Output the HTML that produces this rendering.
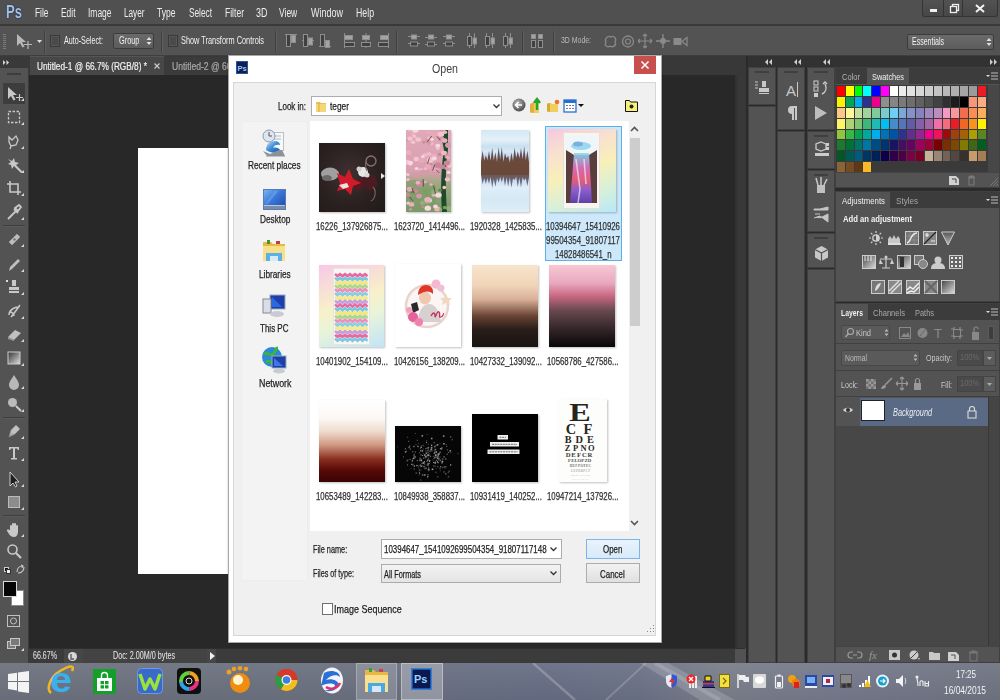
<!DOCTYPE html>
<html><head><meta charset="utf-8">
<style>
*{box-sizing:border-box;margin:0;padding:0}
html,body{width:1000px;height:700px;overflow:hidden;background:#282828;font-family:"Liberation Sans",sans-serif;position:relative}
.a{position:absolute}
.t{position:absolute;white-space:nowrap;line-height:1;transform-origin:0 0}
svg{overflow:visible}
</style></head><body>
<div class="a" style="left:0px;top:0px;width:1000px;height:25px;background:#505050;"></div>
<div class="a" style="left:0px;top:24px;width:1000px;height:2px;background:#3a3a3a;"></div>
<span class="t" id="tx0" style="left:5.5px;top:2.32px;font-size:19px;color:#a2bde6;font-weight:bold;transform:scaleX(0.688);text-shadow:0 0 1.5px #1a2a40,0 0 1px #1a2a40;">Ps</span>
<div class="a" style="left:0px;top:0px;width:28px;height:24px;background:rgba(40,60,90,.0);"></div>
<span class="t" id="tx1" style="left:34.5px;top:6.64px;font-size:12px;color:#ececec;font-weight:normal;transform:scaleX(0.698);">File</span>
<span class="t" id="tx2" style="left:60.5px;top:6.64px;font-size:12px;color:#ececec;font-weight:normal;transform:scaleX(0.701);">Edit</span>
<span class="t" id="tx3" style="left:87.5px;top:6.64px;font-size:12px;color:#ececec;font-weight:normal;transform:scaleX(0.704);">Image</span>
<span class="t" id="tx4" style="left:124.0px;top:6.64px;font-size:12px;color:#ececec;font-weight:normal;transform:scaleX(0.683);">Layer</span>
<span class="t" id="tx5" style="left:157.0px;top:6.64px;font-size:12px;color:#ececec;font-weight:normal;transform:scaleX(0.711);">Type</span>
<span class="t" id="tx6" style="left:188.5px;top:6.64px;font-size:12px;color:#ececec;font-weight:normal;transform:scaleX(0.689);">Select</span>
<span class="t" id="tx7" style="left:224.5px;top:6.64px;font-size:12px;color:#ececec;font-weight:normal;transform:scaleX(0.712);">Filter</span>
<span class="t" id="tx8" style="left:256.0px;top:6.64px;font-size:12px;color:#ececec;font-weight:normal;transform:scaleX(0.749);">3D</span>
<span class="t" id="tx9" style="left:279.25px;top:6.64px;font-size:12px;color:#ececec;font-weight:normal;transform:scaleX(0.707);">View</span>
<span class="t" id="tx10" style="left:311.0px;top:6.64px;font-size:12px;color:#ececec;font-weight:normal;transform:scaleX(0.750);">Window</span>
<span class="t" id="tx11" style="left:355.5px;top:6.64px;font-size:12px;color:#ececec;font-weight:normal;transform:scaleX(0.729);">Help</span>
<div class="a" style="left:922px;top:0px;width:76px;height:17px;background:linear-gradient(#525252,#474747);border:1px solid #343434;border-top:none;border-radius:0 0 3px 3px"></div>
<div class="a" style="left:943px;top:0px;width:1px;height:16px;background:#333;"></div>
<div class="a" style="left:962px;top:0px;width:1px;height:16px;background:#333;"></div>
<div class="a" style="left:930px;top:9px;width:7px;height:3px;background:#f0f0f0;"></div>
<svg class="a" style="left:950px;top:4px;" width="9" height="9" viewBox="0 0 9 9"><rect x="2.5" y="0.5" width="6" height="6" fill="none" stroke="#eee" stroke-width="1.3"/><rect x="0.5" y="2.5" width="6" height="6" fill="#454545" stroke="#eee" stroke-width="1.3"/></svg>
<svg class="a" style="left:975px;top:4px;" width="10" height="9" viewBox="0 0 10 9"><path d="M1 1L9 8M9 1L1 8" stroke="#f2f2f2" stroke-width="2"/></svg>
<div class="a" style="left:0px;top:26px;width:1000px;height:30px;background:#535353;"></div>
<div class="a" style="left:0px;top:55px;width:1000px;height:1px;background:#3e3e3e;"></div>
<div class="a" style="left:3px;top:34px;width:3px;height:15px;background:repeating-linear-gradient(#7a7a7a 0 1px,transparent 1px 2px);"></div>
<svg class="a" style="left:16px;top:33px;" width="28" height="16" viewBox="0 0 28 16"><path d="M1 1 L1 13 L4 10 L6.5 14.5 L8.5 13.5 L6 9 L10 9 Z" fill="#b8b8b8"/><path d="M8 11.5h8M12 8v8" stroke="#b8b8b8" stroke-width="1.2"/><path d="M21 7h5l-2.5 3z" fill="#dedede"/></svg>
<div class="a" style="left:44px;top:31px;width:1px;height:22px;background:#404040;"></div>
<div class="a" style="left:45px;top:31px;width:1px;height:22px;background:#5e5e5e;"></div>
<div class="a" style="left:50px;top:35px;width:10px;height:12px;background:#4a4a4a;border:1px solid #393939;box-shadow:inset 0 0 0 1px #575757"></div>
<span class="t" id="tx12" style="left:64px;top:35.53px;font-size:10px;color:#f0f0f0;font-weight:normal;transform:scaleX(0.716);">Auto-Select:</span>
<div class="a" style="left:113px;top:33px;width:41px;height:16px;background:linear-gradient(#6a6a6a,#5c5c5c);border:1px solid #3c3c3c;border-radius:2px"></div>
<span class="t" id="tx13" style="left:118.6px;top:35.73px;font-size:10px;color:#f0f0f0;font-weight:normal;transform:scaleX(0.734);">Group</span>
<svg class="a" style="left:146px;top:36px;" width="6" height="10" viewBox="0 0 6 10"><path d="M0.5 4L3 1L5.5 4zM0.5 6L3 9L5.5 6z" fill="#e0e0e0"/></svg>
<div class="a" style="left:161px;top:31px;width:1px;height:22px;background:#404040;"></div>
<div class="a" style="left:162px;top:31px;width:1px;height:22px;background:#5e5e5e;"></div>
<div class="a" style="left:168px;top:35px;width:10px;height:12px;background:#4a4a4a;border:1px solid #393939;box-shadow:inset 0 0 0 1px #575757"></div>
<span class="t" id="tx14" style="left:181px;top:35.53px;font-size:10px;color:#f0f0f0;font-weight:normal;transform:scaleX(0.736);">Show Transform Controls</span>
<div class="a" style="left:275px;top:31px;width:1px;height:22px;background:#404040;"></div>
<div class="a" style="left:276px;top:31px;width:1px;height:22px;background:#5e5e5e;"></div>
<div class="a" style="left:396px;top:31px;width:1px;height:22px;background:#404040;"></div>
<div class="a" style="left:397px;top:31px;width:1px;height:22px;background:#5e5e5e;"></div>
<div class="a" style="left:522px;top:31px;width:1px;height:22px;background:#404040;"></div>
<div class="a" style="left:523px;top:31px;width:1px;height:22px;background:#5e5e5e;"></div>
<div class="a" style="left:553px;top:31px;width:1px;height:22px;background:#404040;"></div>
<div class="a" style="left:554px;top:31px;width:1px;height:22px;background:#5e5e5e;"></div>
<svg class="a" style="left:285px;top:33px;" width="12" height="15" viewBox="0 0 12 15"><path d="M0 1.5h12" stroke="#8e8e8e"/><rect x="1.5" y="1.5" width="4" height="12" fill="#404040" stroke="#8e8e8e"/><rect x="6.5" y="2.5" width="4" height="7" fill="#a4a4a4" stroke="#8e8e8e"/></svg>
<svg class="a" style="left:302px;top:33px;" width="12" height="15" viewBox="0 0 12 15"><path d="M0 7.5h12" stroke="#8e8e8e"/><rect x="1.5" y="1.5" width="4" height="12" fill="#404040" stroke="#8e8e8e"/><rect x="6.5" y="5.0" width="4" height="7" fill="#a4a4a4" stroke="#8e8e8e"/></svg>
<svg class="a" style="left:319px;top:33px;" width="12" height="15" viewBox="0 0 12 15"><path d="M0 13.5h12" stroke="#8e8e8e"/><rect x="1.5" y="1.5" width="4" height="12" fill="#404040" stroke="#8e8e8e"/><rect x="6.5" y="7.5" width="4" height="7" fill="#a4a4a4" stroke="#8e8e8e"/></svg>
<svg class="a" style="left:343px;top:33px;" width="12" height="15" viewBox="0 0 12 15"><path d="M1.5 0v15" stroke="#8e8e8e"/><rect x="1.5" y="2.5" width="8" height="4" fill="#a4a4a4" stroke="#8e8e8e"/><rect x="1.5" y="9.5" width="10" height="4" fill="#404040" stroke="#8e8e8e"/></svg>
<svg class="a" style="left:360px;top:33px;" width="12" height="15" viewBox="0 0 12 15"><path d="M6 0v15" stroke="#8e8e8e"/><rect x="2.5" y="2.5" width="7" height="4" fill="#a4a4a4" stroke="#8e8e8e"/><rect x="1.5" y="9.5" width="9" height="4" fill="#404040" stroke="#8e8e8e"/></svg>
<svg class="a" style="left:378px;top:33px;" width="12" height="15" viewBox="0 0 12 15"><path d="M10.5 0v15" stroke="#8e8e8e"/><rect x="2.5" y="2.5" width="8" height="4" fill="#a4a4a4" stroke="#8e8e8e"/><rect x="0.5" y="9.5" width="10" height="4" fill="#404040" stroke="#8e8e8e"/></svg>
<svg class="a" style="left:408px;top:33px;" width="12" height="15" viewBox="0 0 12 15"><path d="M0 3.5h12M0 10.5h12" stroke="#8e8e8e"/><rect x="3.5" y="2" width="5" height="4" fill="#a4a4a4" stroke="#8e8e8e"/><rect x="2.5" y="9" width="7" height="4" fill="#404040" stroke="#8e8e8e"/></svg>
<svg class="a" style="left:425px;top:33px;" width="12" height="15" viewBox="0 0 12 15"><path d="M0 4.5h12M0 11.5h12" stroke="#8e8e8e"/><rect x="3.5" y="2" width="5" height="4" fill="#a4a4a4" stroke="#8e8e8e"/><rect x="2.5" y="9" width="7" height="4" fill="#404040" stroke="#8e8e8e"/></svg>
<svg class="a" style="left:443px;top:33px;" width="12" height="15" viewBox="0 0 12 15"><path d="M0 3.5h12M0 10.5h12" stroke="#8e8e8e"/><rect x="3.5" y="2" width="5" height="4" fill="#a4a4a4" stroke="#8e8e8e"/><rect x="2.5" y="9" width="7" height="4" fill="#404040" stroke="#8e8e8e"/></svg>
<svg class="a" style="left:466px;top:33px;" width="12" height="15" viewBox="0 0 12 15"><path d="M3.5 0v15M8.5 0v15" stroke="#8e8e8e"/><rect x="1.5" y="3.5" width="4" height="9" fill="#404040" stroke="#8e8e8e"/><rect x="7" y="5" width="3.5" height="6" fill="#a4a4a4" stroke="#8e8e8e"/></svg>
<svg class="a" style="left:484px;top:33px;" width="12" height="15" viewBox="0 0 12 15"><path d="M2.5 0v15M8.5 0v15" stroke="#8e8e8e"/><rect x="1.5" y="3.5" width="4" height="9" fill="#404040" stroke="#8e8e8e"/><rect x="7" y="5" width="3.5" height="6" fill="#a4a4a4" stroke="#8e8e8e"/></svg>
<svg class="a" style="left:502px;top:33px;" width="12" height="15" viewBox="0 0 12 15"><path d="M3.5 0v15M8.5 0v15" stroke="#8e8e8e"/><rect x="1.5" y="3.5" width="4" height="9" fill="#404040" stroke="#8e8e8e"/><rect x="7" y="5" width="3.5" height="6" fill="#a4a4a4" stroke="#8e8e8e"/></svg>
<svg class="a" style="left:530px;top:33px;" width="14" height="15" viewBox="0 0 14 15"><rect x="1.5" y="1.5" width="4" height="4" fill="#a4a4a4" stroke="#8e8e8e"/><rect x="8.5" y="1.5" width="4" height="4" fill="#a4a4a4" stroke="#8e8e8e"/><rect x="1.5" y="7.5" width="4" height="7" fill="#404040" stroke="#8e8e8e"/><rect x="8.5" y="7.5" width="4" height="7" fill="#404040" stroke="#8e8e8e"/></svg>
<span class="t" id="tx15" style="left:561px;top:36.38px;font-size:9px;color:#b9b9b9;font-weight:normal;transform:scaleX(0.769);">3D Mode:</span>
<svg class="a" style="left:603px;top:33px;" width="14" height="16" viewBox="0 0 14 16"><path d="M3 9c-2-3 2-7 5-5 3-2 6 2 4 5 2 3-2 6-5 4-3 2-6-1-4-4z" fill="none" stroke="#8a8a8a" stroke-width="1.3"/></svg>
<svg class="a" style="left:621px;top:33px;" width="14" height="16" viewBox="0 0 14 16"><circle cx="7" cy="8.5" r="5.5" fill="none" stroke="#8a8a8a" stroke-width="1.3"/><circle cx="7" cy="8.5" r="2.5" fill="none" stroke="#8a8a8a" stroke-width="1.2"/></svg>
<svg class="a" style="left:638px;top:33px;" width="14" height="16" viewBox="0 0 14 16"><path d="M7 1v14M0 8h14M7 1l-2 2M7 1l2 2M7 15l-2-2M7 15l2-2M0 8l2-2M0 8l2 2M14 8l-2-2M14 8l-2 2" stroke="#8a8a8a" stroke-width="1.2" fill="none"/></svg>
<svg class="a" style="left:656px;top:33px;" width="14" height="16" viewBox="0 0 14 16"><path d="M7 1v14M0 8h14" stroke="#8a8a8a" stroke-width="1.3"/><circle cx="7" cy="8" r="3" fill="#8a8a8a"/></svg>
<svg class="a" style="left:673px;top:33px;" width="14" height="16" viewBox="0 0 14 16"><rect x="0.5" y="5" width="8" height="7" fill="#8a8a8a"/><path d="M9 8.5l5-4v8z" fill="none" stroke="#8a8a8a" stroke-width="1.2"/></svg>
<div class="a" style="left:907px;top:34px;width:87px;height:16px;background:linear-gradient(#6a6a6a,#5c5c5c);border:1px solid #3c3c3c;border-radius:2px"></div>
<span class="t" id="tx16" style="left:912px;top:36.53px;font-size:10px;color:#f2f2f2;font-weight:normal;transform:scaleX(0.702);">Essentials</span>
<svg class="a" style="left:986px;top:37px;" width="6" height="10" viewBox="0 0 6 10"><path d="M0.5 4L3 1L5.5 4zM0.5 6L3 9L5.5 6z" fill="#e0e0e0"/></svg>
<div class="a" style="left:29px;top:56px;width:720px;height:19px;background:#383838;"></div>
<div class="a" style="left:30px;top:56px;width:134px;height:19px;background:#474747;border-top:1px solid #555"></div>
<div class="a" style="left:164px;top:57px;width:64px;height:18px;background:#3b3b3b;"></div>
<span class="t" id="tx17" style="left:37px;top:61.53px;font-size:10px;color:#f0f0f0;font-weight:normal;transform:scaleX(0.827);-webkit-text-stroke:.2px #f0f0f0;">Untitled-1 @ 66.7% (RGB/8) *</span>
<svg class="a" style="left:154px;top:63px;" width="6" height="6" viewBox="0 0 6 6"><path d="M0.5 0.5L5.5 5.5M5.5 0.5L0.5 5.5" stroke="#cfcfcf" stroke-width="1.1"/></svg>
<span class="t" id="tx18" style="left:172px;top:61.53px;font-size:10px;color:#a8a8a8;font-weight:normal;transform:scaleX(0.855);-webkit-text-stroke:.2px #a8a8a8;">Untitled-2 @ 66.7% (RGB/8)</span>
<div class="a" style="left:29px;top:75px;width:720px;height:573px;background:#282828;"></div>
<div class="a" style="left:735px;top:75px;width:11px;height:573px;background:linear-gradient(90deg,#303030,#393939 40%,#383838);"></div>
<div class="a" style="left:746px;top:56px;width:3px;height:607px;background:#2a2a2a;"></div>
<div class="a" style="left:138px;top:148px;width:95px;height:426px;background:#ffffff;"></div>
<div class="a" style="left:0px;top:56px;width:28px;height:607px;background:#535353;"></div>
<div class="a" style="left:28px;top:56px;width:1px;height:607px;background:#3a3a3a;"></div>
<div class="a" style="left:0px;top:56px;width:28px;height:12px;background:#393939;"></div>
<svg class="a" style="left:3px;top:60px;" width="7" height="5" viewBox="0 0 7 5"><path d="M0 0l2.5 2.5-2.5 2.5zM3.5 0l2.5 2.5-2.5 2.5z" fill="#d8d8d8"/></svg>
<div class="a" style="left:7px;top:73px;width:14px;height:2px;background:#3d3d3d;"></div>
<div class="a" style="left:3px;top:83px;width:22px;height:21px;background:#3d3d3d;border-radius:1px"></div>
<svg width="0" height="0" style="position:absolute"><defs><linearGradient id="gr1" x1="0" y1="0" x2="1" y2="1"><stop offset="0" stop-color="#333"/><stop offset="1" stop-color="#ddd"/></linearGradient></defs></svg>
<svg class="a" style="left:6px;top:85px;" width="18" height="16" viewBox="0 0 18 16"><path d="M2 2 L2 14 L5 11 L7.5 15.5 L9.5 14.5 L7 10 L11 10 Z" fill="#c8c8c8"/><path d="M10 12.5h7M13.5 9v7" stroke="#c8c8c8" stroke-width="1.2"/></svg>
<svg class="a" style="left:21px;top:98px;" width="3" height="3" viewBox="0 0 3 3"><path d="M3 0v3h-3z" fill="#d8d8d8"/></svg>
<svg class="a" style="left:6px;top:109px;" width="18" height="16" viewBox="0 0 18 16"><rect x="2.5" y="2.5" width="11" height="11" fill="none" stroke="#c8c8c8" stroke-width="1.3" stroke-dasharray="2.5 1.5"/></svg>
<svg class="a" style="left:21px;top:122px;" width="3" height="3" viewBox="0 0 3 3"><path d="M3 0v3h-3z" fill="#d8d8d8"/></svg>
<svg class="a" style="left:6px;top:133px;" width="18" height="16" viewBox="0 0 18 16"><path d="M3 4l3 3 4-4 2 4-2 5-5 1-2-4z M5 13l-1 3" fill="none" stroke="#c8c8c8" stroke-width="1.3"/></svg>
<svg class="a" style="left:21px;top:146px;" width="3" height="3" viewBox="0 0 3 3"><path d="M3 0v3h-3z" fill="#d8d8d8"/></svg>
<svg class="a" style="left:6px;top:157px;" width="18" height="16" viewBox="0 0 18 16"><path d="M2 2l4 2 2-3 1 4 4 1-3 2 7 7-2 1-7-7-2 3-1-4-3-1 3-2z" fill="#c8c8c8"/></svg>
<svg class="a" style="left:21px;top:170px;" width="3" height="3" viewBox="0 0 3 3"><path d="M3 0v3h-3z" fill="#d8d8d8"/></svg>
<svg class="a" style="left:6px;top:180px;" width="18" height="16" viewBox="0 0 18 16"><path d="M4 1v11h11M1 4h11v11" fill="none" stroke="#c8c8c8" stroke-width="1.6"/></svg>
<svg class="a" style="left:21px;top:193px;" width="3" height="3" viewBox="0 0 3 3"><path d="M3 0v3h-3z" fill="#d8d8d8"/></svg>
<svg class="a" style="left:6px;top:204px;" width="18" height="16" viewBox="0 0 18 16"><path d="M2 15l8-8M9 4l4-3 2 2-3 4zM8 5l4 4" stroke="#c8c8c8" stroke-width="1.8" fill="none"/></svg>
<svg class="a" style="left:21px;top:217px;" width="3" height="3" viewBox="0 0 3 3"><path d="M3 0v3h-3z" fill="#d8d8d8"/></svg>
<svg class="a" style="left:6px;top:231px;" width="18" height="16" viewBox="0 0 18 16"><path d="M3 11l8-8 3 3-8 8z" fill="#bdbdbd" stroke="#999"/><circle cx="8.5" cy="8.5" r="1.2" fill="#777"/></svg>
<svg class="a" style="left:21px;top:244px;" width="3" height="3" viewBox="0 0 3 3"><path d="M3 0v3h-3z" fill="#d8d8d8"/></svg>
<svg class="a" style="left:6px;top:256px;" width="18" height="16" viewBox="0 0 18 16"><path d="M3 15l1-4 8-8 2 2-8 8z" fill="#c0c0c0"/></svg>
<svg class="a" style="left:21px;top:269px;" width="3" height="3" viewBox="0 0 3 3"><path d="M3 0v3h-3z" fill="#d8d8d8"/></svg>
<svg class="a" style="left:6px;top:279px;" width="18" height="16" viewBox="0 0 18 16"><path d="M6 1h4v6h-4zM3 8h10v3h-10zM3 12h10v2h-10z" fill="#c8c8c8"/><path d="M0 1l2 2M2 1l-2 2" stroke="#ddd"/></svg>
<svg class="a" style="left:21px;top:292px;" width="3" height="3" viewBox="0 0 3 3"><path d="M3 0v3h-3z" fill="#d8d8d8"/></svg>
<svg class="a" style="left:6px;top:303px;" width="18" height="16" viewBox="0 0 18 16"><path d="M3 12c0-6 8-9 10-7M5 14c2-2 6-8 9-12M4 9c2 0 4 2 4 4" fill="none" stroke="#c8c8c8" stroke-width="1.5"/></svg>
<svg class="a" style="left:21px;top:316px;" width="3" height="3" viewBox="0 0 3 3"><path d="M3 0v3h-3z" fill="#d8d8d8"/></svg>
<svg class="a" style="left:6px;top:326px;" width="18" height="16" viewBox="0 0 18 16"><path d="M2 11l7-7 6 3-7 7z" fill="#c0c0c0"/><path d="M2 11v2l6 2v-1" fill="#999"/></svg>
<svg class="a" style="left:21px;top:339px;" width="3" height="3" viewBox="0 0 3 3"><path d="M3 0v3h-3z" fill="#d8d8d8"/></svg>
<svg class="a" style="left:6px;top:350px;" width="18" height="16" viewBox="0 0 18 16"><rect x="2" y="2" width="12" height="12" fill="url(#gr1)" stroke="#ccc"/></svg>
<svg class="a" style="left:21px;top:363px;" width="3" height="3" viewBox="0 0 3 3"><path d="M3 0v3h-3z" fill="#d8d8d8"/></svg>
<svg class="a" style="left:6px;top:373px;" width="18" height="16" viewBox="0 0 18 16"><path d="M8 2c3 5 5 7 5 10a5 5 0 0 1-10 0c0-3 2-5 5-10z" fill="#b8b8b8"/></svg>
<svg class="a" style="left:21px;top:386px;" width="3" height="3" viewBox="0 0 3 3"><path d="M3 0v3h-3z" fill="#d8d8d8"/></svg>
<svg class="a" style="left:6px;top:396px;" width="18" height="16" viewBox="0 0 18 16"><circle cx="6.5" cy="6.5" r="4.5" fill="#bbb"/><path d="M10 10l5 5" stroke="#ccc" stroke-width="2"/></svg>
<svg class="a" style="left:21px;top:409px;" width="3" height="3" viewBox="0 0 3 3"><path d="M3 0v3h-3z" fill="#d8d8d8"/></svg>
<svg class="a" style="left:6px;top:423px;" width="18" height="16" viewBox="0 0 18 16"><path d="M3 14l2-7 5-5 4 4-5 5z M3 14l4-4" fill="#c0c0c0" stroke="#888" stroke-width=".6"/></svg>
<svg class="a" style="left:21px;top:436px;" width="3" height="3" viewBox="0 0 3 3"><path d="M3 0v3h-3z" fill="#d8d8d8"/></svg>
<svg class="a" style="left:6px;top:445px;" width="18" height="16" viewBox="0 0 18 16"><path d="M3 2h10v3h-1l-1-1.5h-2V13h2v1.5H5V13h2V3.5H5L4 5H3z" fill="#c8c8c8"/></svg>
<svg class="a" style="left:21px;top:458px;" width="3" height="3" viewBox="0 0 3 3"><path d="M3 0v3h-3z" fill="#d8d8d8"/></svg>
<svg class="a" style="left:6px;top:471px;" width="18" height="16" viewBox="0 0 18 16"><path d="M4 1 L4 15 L7 12 L9.5 16 L11 15 L9 11 L13 11 Z" fill="#1e1e1e" stroke="#ccc" stroke-width="1"/></svg>
<svg class="a" style="left:21px;top:484px;" width="3" height="3" viewBox="0 0 3 3"><path d="M3 0v3h-3z" fill="#d8d8d8"/></svg>
<svg class="a" style="left:6px;top:494px;" width="18" height="16" viewBox="0 0 18 16"><rect x="2.5" y="2.5" width="11" height="11" fill="#8c8c8c" stroke="#bbb"/></svg>
<svg class="a" style="left:21px;top:507px;" width="3" height="3" viewBox="0 0 3 3"><path d="M3 0v3h-3z" fill="#d8d8d8"/></svg>
<svg class="a" style="left:6px;top:521px;" width="18" height="16" viewBox="0 0 18 16"><path d="M4 9V5a1 1 0 0 1 2 0v3V3a1 1 0 0 1 2 0v5V3a1 1 0 0 1 2 0v5V5a1 1 0 0 1 2 0v6c0 3-2 5-4 5s-4-1-5-3l-2-3a1 1 0 0 1 2-1z" fill="#c8c8c8"/></svg>
<svg class="a" style="left:21px;top:534px;" width="3" height="3" viewBox="0 0 3 3"><path d="M3 0v3h-3z" fill="#d8d8d8"/></svg>
<svg class="a" style="left:6px;top:543px;" width="18" height="16" viewBox="0 0 18 16"><circle cx="6.5" cy="6.5" r="4.5" fill="none" stroke="#c8c8c8" stroke-width="1.6"/><path d="M10 10l5 5" stroke="#c8c8c8" stroke-width="2.2"/></svg>
<div class="a" style="left:3px;top:225px;width:22px;height:1px;background:#3e3e3e;"></div>
<div class="a" style="left:3px;top:226px;width:22px;height:1px;background:#5a5a5a;"></div>
<div class="a" style="left:3px;top:417px;width:22px;height:1px;background:#3e3e3e;"></div>
<div class="a" style="left:3px;top:418px;width:22px;height:1px;background:#5a5a5a;"></div>
<div class="a" style="left:3px;top:515px;width:22px;height:1px;background:#3e3e3e;"></div>
<div class="a" style="left:3px;top:516px;width:22px;height:1px;background:#5a5a5a;"></div>
<div class="a" style="left:4px;top:567px;width:5px;height:5px;background:#111;border:1px solid #ccc"></div>
<div class="a" style="left:6px;top:569px;width:5px;height:5px;background:#eee;border:1px solid #333"></div>
<svg class="a" style="left:16px;top:565px;" width="9" height="9" viewBox="0 0 9 9"><path d="M1 7c0-4 3-6 6-6M5 0l2 1-1 2M8 2c0 4-3 6-6 6" fill="none" stroke="#ccc" stroke-width="1.1"/></svg>
<div class="a" style="left:11px;top:590px;width:13px;height:16px;background:#ffffff;border:1px solid #888"></div>
<div class="a" style="left:3px;top:581px;width:14px;height:16px;background:#050505;border:1px solid #d8d8d8"></div>
<div class="a" style="left:7px;top:615px;width:13px;height:12px;background:transparent;border:1px solid #c0c0c0"></div>
<svg class="a" style="left:9px;top:617px;" width="9" height="8" viewBox="0 0 9 8"><circle cx="4.5" cy="4" r="3" fill="none" stroke="#c0c0c0" stroke-width="1"/></svg>
<div class="a" style="left:7px;top:641px;width:9px;height:8px;background:#7a7a7a;border:1px solid #c8c8c8"></div>
<div class="a" style="left:10px;top:638px;width:10px;height:8px;background:#7a7a7a;border:1px solid #c8c8c8"></div>
<svg class="a" style="left:21px;top:648px;" width="3" height="3" viewBox="0 0 3 3"><path d="M3 0v3h-3z" fill="#d8d8d8"/></svg>
<div class="a" style="left:29px;top:648px;width:717px;height:15px;background:#3b3b3b;"></div>
<div class="a" style="left:735px;top:648px;width:11px;height:15px;background:#525252;"></div>
<div class="a" style="left:29px;top:648px;width:716px;height:1px;background:#2e2e2e;"></div>
<span class="t" id="tx19" style="left:33px;top:650.53px;font-size:10px;color:#ececec;font-weight:normal;transform:scaleX(0.708);">66.67%</span>
<div class="a" style="left:64px;top:649px;width:19px;height:14px;background:#474747;"></div>
<svg class="a" style="left:67px;top:651px;" width="11" height="11" viewBox="0 0 11 11"><circle cx="5.5" cy="5.5" r="4.5" fill="#d8d8d8"/><path d="M4 3v5h3" stroke="#555" stroke-width="1.3" fill="none"/></svg>
<div class="a" style="left:83px;top:649px;width:124px;height:14px;background:#434343;"></div>
<span class="t" id="tx20" style="left:113px;top:650.53px;font-size:10px;color:#ececec;font-weight:normal;transform:scaleX(0.720);">Doc: 2.00M/0 bytes</span>
<div class="a" style="left:207px;top:649px;width:9px;height:14px;background:#474747;"></div>
<svg class="a" style="left:210px;top:652px;" width="5" height="8" viewBox="0 0 5 8"><path d="M0 0l5 4-5 4z" fill="#f0f0f0"/></svg>
<div class="a" style="left:748px;top:56px;width:252px;height:607px;background:#2b2b2b;"></div>
<div class="a" style="left:748px;top:56px;width:252px;height:11px;background:#323232;"></div>
<svg class="a" style="left:765px;top:59px;" width="7" height="6" viewBox="0 0 7 6"><path d="M3 0L0 3l3 3zM7 0L4 3l3 3z" fill="#cfcfcf"/></svg>
<svg class="a" style="left:794px;top:59px;" width="7" height="6" viewBox="0 0 7 6"><path d="M3 0L0 3l3 3zM7 0L4 3l3 3z" fill="#cfcfcf"/></svg>
<svg class="a" style="left:823px;top:59px;" width="7" height="6" viewBox="0 0 7 6"><path d="M3 0L0 3l3 3zM7 0L4 3l3 3z" fill="#cfcfcf"/></svg>
<svg class="a" style="left:990px;top:59px;" width="7" height="6" viewBox="0 0 7 6"><path d="M0 0l3 3-3 3zM4 0l3 3-3 3z" fill="#cfcfcf"/></svg>
<div class="a" style="left:748px;top:67px;width:28px;height:38px;background:#535353;border:1px solid #404040"></div><div class="a" style="left:755px;top:71px;width:14px;height:2px;background:#3f3f3f;"></div>
<div class="a" style="left:748px;top:106px;width:28px;height:557px;background:#535353;border:1px solid #404040"></div>
<div class="a" style="left:777px;top:67px;width:28px;height:63px;background:#535353;border:1px solid #404040"></div><div class="a" style="left:784px;top:71px;width:14px;height:2px;background:#3f3f3f;"></div>
<div class="a" style="left:777px;top:131px;width:28px;height:532px;background:#535353;border:1px solid #404040"></div>
<div class="a" style="left:807px;top:67px;width:28px;height:63px;background:#535353;border:1px solid #404040"></div><div class="a" style="left:814px;top:71px;width:14px;height:2px;background:#3f3f3f;"></div>
<div class="a" style="left:807px;top:131px;width:28px;height:38px;background:#535353;border:1px solid #404040"></div><div class="a" style="left:814px;top:135px;width:14px;height:2px;background:#3f3f3f;"></div>
<div class="a" style="left:807px;top:170px;width:28px;height:62px;background:#535353;border:1px solid #404040"></div><div class="a" style="left:814px;top:174px;width:14px;height:2px;background:#3f3f3f;"></div>
<div class="a" style="left:807px;top:233px;width:28px;height:35px;background:#535353;border:1px solid #404040"></div><div class="a" style="left:814px;top:237px;width:14px;height:2px;background:#3f3f3f;"></div>
<div class="a" style="left:807px;top:269px;width:28px;height:394px;background:#535353;border:1px solid #404040"></div>
<svg class="a" style="left:754px;top:80px;" width="16" height="16" viewBox="0 0 16 16"><path d="M1 2h3M1 5h3M1 8h3" stroke="#c8c8c8"/><path d="M8 1h4v6h-4zM5 8h10v4h-10z" fill="#c8c8c8"/><path d="M5 13.5h10" stroke="#c8c8c8"/></svg>
<span class="t" id="tx21" style="left:786px;top:83.30px;font-size:15px;color:#c8c8c8;font-weight:normal;">A</span>
<div class="a" style="left:797px;top:82px;width:1px;height:15px;background:#c8c8c8;"></div>
<svg class="a" style="left:786px;top:105px;" width="12" height="16" viewBox="0 0 12 16"><path d="M6 1h5v14h-2V3h-1v12H6V9a4 4 0 0 1 0-8z" fill="#c8c8c8"/></svg>
<svg class="a" style="left:813px;top:80px;" width="16" height="17" viewBox="0 0 16 17"><rect x="1" y="1" width="4" height="4" fill="none" stroke="#ccc"/><rect x="1" y="7" width="4" height="4" fill="none" stroke="#ccc"/><rect x="1" y="13" width="4" height="4" fill="#ccc"/><path d="M9 14c4-2 5-6 3-10M10 4l2-2 2 2" fill="none" stroke="#ccc" stroke-width="1.4"/></svg>
<svg class="a" style="left:815px;top:106px;" width="12" height="14" viewBox="0 0 12 14"><path d="M0 0l12 7-12 7z" fill="#bdbdbd"/></svg>
<svg class="a" style="left:814px;top:141px;" width="16" height="16" viewBox="0 0 16 16"><path d="M7 1l5 2v5l-5 2-5-2V3z" fill="none" stroke="#ccc" stroke-width="1.3"/><rect x="12" y="2" width="3" height="3" fill="#ccc"/><rect x="12" y="6" width="3" height="3" fill="#ccc"/><rect x="1" y="12" width="14" height="3" fill="#ccc"/></svg>
<svg class="a" style="left:813px;top:176px;" width="16" height="18" viewBox="0 0 16 18"><path d="M4 9h8v8H4z" fill="#c0c0c0"/><path d="M5 9L3 2M8 9V1M11 9l3-6" stroke="#c8c8c8" stroke-width="1.5"/></svg>
<svg class="a" style="left:813px;top:206px;" width="16" height="17" viewBox="0 0 16 17"><path d="M1 3h6l8-2v3l-8 0-6 0zM2 8h5M1 12l6-2 8 6v-8l-8 4" fill="#c4c4c4" stroke="#c4c4c4"/></svg>
<svg class="a" style="left:814px;top:245px;" width="15" height="17" viewBox="0 0 15 17"><path d="M7.5 1l6.5 3.5v8L7.5 16 1 12.5v-8z" fill="#c8c8c8"/><path d="M1 4.5l6.5 3.5 6.5-3.5M7.5 8v8" stroke="#535353" stroke-width="1.2" fill="none"/></svg>
<div class="a" style="left:835px;top:67px;width:165px;height:121px;background:#535353;border:1px solid #404040"></div>
<div class="a" style="left:836px;top:68px;width:164px;height:16px;background:#3c3c3c;"></div>
<div class="a" style="left:867px;top:68px;width:42px;height:16px;background:#535353;"></div>
<span class="t" id="tx22" style="left:842px;top:71.96px;font-size:9.5px;color:#b4b4b4;font-weight:normal;transform:scaleX(0.793);">Color</span>
<span class="t" id="tx23" style="left:872px;top:71.96px;font-size:9.5px;color:#f0f0f0;font-weight:normal;transform:scaleX(0.777);">Swatches</span>
<svg class="a" style="left:986px;top:72px;" width="12" height="9" viewBox="0 0 12 9"><path d="M0 3h4l-2 2z" fill="#ddd"/><path d="M5 1h7M5 4h7M5 7h7" stroke="#bbb" stroke-width="1.2"/></svg>
<div class="a" style="left:836px;top:85px;width:152px;height:87px;background:#3a3a3a;"></div>
<div class="a" style="left:837px;top:86px;width:8px;height:10px;background:#ff0000"></div>
<div class="a" style="left:846px;top:86px;width:8px;height:10px;background:#ffff00"></div>
<div class="a" style="left:855px;top:86px;width:7px;height:10px;background:#00ff00"></div>
<div class="a" style="left:863px;top:86px;width:8px;height:10px;background:#00ffff"></div>
<div class="a" style="left:872px;top:86px;width:8px;height:10px;background:#0000ff"></div>
<div class="a" style="left:881px;top:86px;width:8px;height:10px;background:#ff00ff"></div>
<div class="a" style="left:890px;top:86px;width:8px;height:10px;background:#ffffff"></div>
<div class="a" style="left:899px;top:86px;width:7px;height:10px;background:#ebebeb"></div>
<div class="a" style="left:907px;top:86px;width:8px;height:10px;background:#e1e1e1"></div>
<div class="a" style="left:916px;top:86px;width:8px;height:10px;background:#d7d7d7"></div>
<div class="a" style="left:925px;top:86px;width:8px;height:10px;background:#cdcdcd"></div>
<div class="a" style="left:934px;top:86px;width:8px;height:10px;background:#c3c3c3"></div>
<div class="a" style="left:943px;top:86px;width:7px;height:10px;background:#b9b9b9"></div>
<div class="a" style="left:951px;top:86px;width:8px;height:10px;background:#afafaf"></div>
<div class="a" style="left:960px;top:86px;width:8px;height:10px;background:#a5a5a5"></div>
<div class="a" style="left:969px;top:86px;width:8px;height:10px;background:#9b9b9b"></div>
<div class="a" style="left:978px;top:86px;width:8px;height:10px;background:#ed1c24"></div>
<div class="a" style="left:837px;top:97px;width:8px;height:10px;background:#fff200"></div>
<div class="a" style="left:846px;top:97px;width:8px;height:10px;background:#00a651"></div>
<div class="a" style="left:855px;top:97px;width:7px;height:10px;background:#00aeef"></div>
<div class="a" style="left:863px;top:97px;width:8px;height:10px;background:#2e3192"></div>
<div class="a" style="left:872px;top:97px;width:8px;height:10px;background:#ec008c"></div>
<div class="a" style="left:881px;top:97px;width:8px;height:10px;background:#8f8f8f"></div>
<div class="a" style="left:890px;top:97px;width:8px;height:10px;background:#858585"></div>
<div class="a" style="left:899px;top:97px;width:7px;height:10px;background:#7a7a7a"></div>
<div class="a" style="left:907px;top:97px;width:8px;height:10px;background:#6e6e6e"></div>
<div class="a" style="left:916px;top:97px;width:8px;height:10px;background:#616161"></div>
<div class="a" style="left:925px;top:97px;width:8px;height:10px;background:#525252"></div>
<div class="a" style="left:934px;top:97px;width:8px;height:10px;background:#424242"></div>
<div class="a" style="left:943px;top:97px;width:7px;height:10px;background:#303030"></div>
<div class="a" style="left:951px;top:97px;width:8px;height:10px;background:#1c1c1c"></div>
<div class="a" style="left:960px;top:97px;width:8px;height:10px;background:#000000"></div>
<div class="a" style="left:969px;top:97px;width:8px;height:10px;background:#f7977a"></div>
<div class="a" style="left:978px;top:97px;width:8px;height:10px;background:#f9ad81"></div>
<div class="a" style="left:837px;top:108px;width:8px;height:10px;background:#fdc68a"></div>
<div class="a" style="left:846px;top:108px;width:8px;height:10px;background:#fff79a"></div>
<div class="a" style="left:855px;top:108px;width:7px;height:10px;background:#c4df9b"></div>
<div class="a" style="left:863px;top:108px;width:8px;height:10px;background:#a3d39c"></div>
<div class="a" style="left:872px;top:108px;width:8px;height:10px;background:#82ca9d"></div>
<div class="a" style="left:881px;top:108px;width:8px;height:10px;background:#7accc8"></div>
<div class="a" style="left:890px;top:108px;width:8px;height:10px;background:#6dcff6"></div>
<div class="a" style="left:899px;top:108px;width:7px;height:10px;background:#7da7d9"></div>
<div class="a" style="left:907px;top:108px;width:8px;height:10px;background:#8393ca"></div>
<div class="a" style="left:916px;top:108px;width:8px;height:10px;background:#8781bd"></div>
<div class="a" style="left:925px;top:108px;width:8px;height:10px;background:#a187be"></div>
<div class="a" style="left:934px;top:108px;width:8px;height:10px;background:#bd8cbf"></div>
<div class="a" style="left:943px;top:108px;width:7px;height:10px;background:#f49ac2"></div>
<div class="a" style="left:951px;top:108px;width:8px;height:10px;background:#f6989d"></div>
<div class="a" style="left:960px;top:108px;width:8px;height:10px;background:#f26c4f"></div>
<div class="a" style="left:969px;top:108px;width:8px;height:10px;background:#f68e55"></div>
<div class="a" style="left:978px;top:108px;width:8px;height:10px;background:#fbaf5c"></div>
<div class="a" style="left:837px;top:119px;width:8px;height:10px;background:#fff467"></div>
<div class="a" style="left:846px;top:119px;width:8px;height:10px;background:#acd372"></div>
<div class="a" style="left:855px;top:119px;width:7px;height:10px;background:#7dc473"></div>
<div class="a" style="left:863px;top:119px;width:8px;height:10px;background:#3cb879"></div>
<div class="a" style="left:872px;top:119px;width:8px;height:10px;background:#1cbbb4"></div>
<div class="a" style="left:881px;top:119px;width:8px;height:10px;background:#00bff3"></div>
<div class="a" style="left:890px;top:119px;width:8px;height:10px;background:#448ccb"></div>
<div class="a" style="left:899px;top:119px;width:7px;height:10px;background:#5574b9"></div>
<div class="a" style="left:907px;top:119px;width:8px;height:10px;background:#605ca8"></div>
<div class="a" style="left:916px;top:119px;width:8px;height:10px;background:#855fa8"></div>
<div class="a" style="left:925px;top:119px;width:8px;height:10px;background:#a763a8"></div>
<div class="a" style="left:934px;top:119px;width:8px;height:10px;background:#f06eaa"></div>
<div class="a" style="left:943px;top:119px;width:7px;height:10px;background:#f26d7d"></div>
<div class="a" style="left:951px;top:119px;width:8px;height:10px;background:#ed1c24"></div>
<div class="a" style="left:960px;top:119px;width:8px;height:10px;background:#f26522"></div>
<div class="a" style="left:969px;top:119px;width:8px;height:10px;background:#f7941d"></div>
<div class="a" style="left:978px;top:119px;width:8px;height:10px;background:#fff200"></div>
<div class="a" style="left:837px;top:130px;width:8px;height:9px;background:#8dc73f"></div>
<div class="a" style="left:846px;top:130px;width:8px;height:9px;background:#39b54a"></div>
<div class="a" style="left:855px;top:130px;width:7px;height:9px;background:#00a651"></div>
<div class="a" style="left:863px;top:130px;width:8px;height:9px;background:#00a99d"></div>
<div class="a" style="left:872px;top:130px;width:8px;height:9px;background:#00aeef"></div>
<div class="a" style="left:881px;top:130px;width:8px;height:9px;background:#0072bc"></div>
<div class="a" style="left:890px;top:130px;width:8px;height:9px;background:#0054a6"></div>
<div class="a" style="left:899px;top:130px;width:7px;height:9px;background:#2e3192"></div>
<div class="a" style="left:907px;top:130px;width:8px;height:9px;background:#662d91"></div>
<div class="a" style="left:916px;top:130px;width:8px;height:9px;background:#92278f"></div>
<div class="a" style="left:925px;top:130px;width:8px;height:9px;background:#ec008c"></div>
<div class="a" style="left:934px;top:130px;width:8px;height:9px;background:#ed145b"></div>
<div class="a" style="left:943px;top:130px;width:7px;height:9px;background:#9e0b0f"></div>
<div class="a" style="left:951px;top:130px;width:8px;height:9px;background:#a0410d"></div>
<div class="a" style="left:960px;top:130px;width:8px;height:9px;background:#a36209"></div>
<div class="a" style="left:969px;top:130px;width:8px;height:9px;background:#aba000"></div>
<div class="a" style="left:978px;top:130px;width:8px;height:9px;background:#598527"></div>
<div class="a" style="left:837px;top:140px;width:8px;height:10px;background:#1a7b30"></div>
<div class="a" style="left:846px;top:140px;width:8px;height:10px;background:#007236"></div>
<div class="a" style="left:855px;top:140px;width:7px;height:10px;background:#00746b"></div>
<div class="a" style="left:863px;top:140px;width:8px;height:10px;background:#0076a3"></div>
<div class="a" style="left:872px;top:140px;width:8px;height:10px;background:#004b80"></div>
<div class="a" style="left:881px;top:140px;width:8px;height:10px;background:#003471"></div>
<div class="a" style="left:890px;top:140px;width:8px;height:10px;background:#1b1464"></div>
<div class="a" style="left:899px;top:140px;width:7px;height:10px;background:#440e62"></div>
<div class="a" style="left:907px;top:140px;width:8px;height:10px;background:#630460"></div>
<div class="a" style="left:916px;top:140px;width:8px;height:10px;background:#9e005d"></div>
<div class="a" style="left:925px;top:140px;width:8px;height:10px;background:#9e0039"></div>
<div class="a" style="left:934px;top:140px;width:8px;height:10px;background:#790000"></div>
<div class="a" style="left:943px;top:140px;width:7px;height:10px;background:#7b2e00"></div>
<div class="a" style="left:951px;top:140px;width:8px;height:10px;background:#7d4900"></div>
<div class="a" style="left:960px;top:140px;width:8px;height:10px;background:#827b00"></div>
<div class="a" style="left:969px;top:140px;width:8px;height:10px;background:#406618"></div>
<div class="a" style="left:978px;top:140px;width:8px;height:10px;background:#005e20"></div>
<div class="a" style="left:837px;top:151px;width:8px;height:10px;background:#005826"></div>
<div class="a" style="left:846px;top:151px;width:8px;height:10px;background:#005952"></div>
<div class="a" style="left:855px;top:151px;width:7px;height:10px;background:#005b7f"></div>
<div class="a" style="left:863px;top:151px;width:8px;height:10px;background:#003663"></div>
<div class="a" style="left:872px;top:151px;width:8px;height:10px;background:#002157"></div>
<div class="a" style="left:881px;top:151px;width:8px;height:10px;background:#0d004c"></div>
<div class="a" style="left:890px;top:151px;width:8px;height:10px;background:#32004b"></div>
<div class="a" style="left:899px;top:151px;width:7px;height:10px;background:#4b0049"></div>
<div class="a" style="left:907px;top:151px;width:8px;height:10px;background:#7b0046"></div>
<div class="a" style="left:916px;top:151px;width:8px;height:10px;background:#7a0026"></div>
<div class="a" style="left:925px;top:151px;width:8px;height:10px;background:#c7b299"></div>
<div class="a" style="left:934px;top:151px;width:8px;height:10px;background:#998675"></div>
<div class="a" style="left:943px;top:151px;width:7px;height:10px;background:#736357"></div>
<div class="a" style="left:951px;top:151px;width:8px;height:10px;background:#534741"></div>
<div class="a" style="left:960px;top:151px;width:8px;height:10px;background:#37302d"></div>
<div class="a" style="left:969px;top:151px;width:8px;height:10px;background:#c69c6d"></div>
<div class="a" style="left:978px;top:151px;width:8px;height:10px;background:#a67c52"></div>
<div class="a" style="left:837px;top:162px;width:8px;height:10px;background:#8c6239"></div>
<div class="a" style="left:846px;top:162px;width:8px;height:10px;background:#754c24"></div>
<div class="a" style="left:855px;top:162px;width:7px;height:10px;background:#603913"></div>
<div class="a" style="left:863px;top:162px;width:8px;height:10px;background:#fbb827"></div>
<div class="a" style="left:988px;top:85px;width:11px;height:88px;background:#474747;"></div>
<div class="a" style="left:836px;top:172px;width:163px;height:15px;background:#535353;"></div>
<div class="a" style="left:836px;top:172px;width:163px;height:1px;background:#444;"></div>
<svg class="a" style="left:949px;top:176px;" width="10" height="9" viewBox="0 0 10 9"><path d="M0 0h7l3 3v6H0z" fill="#d0d0d0"/><path d="M3 3h4v4" fill="none" stroke="#444"/></svg>
<svg class="a" style="left:967px;top:175px;" width="9" height="10" viewBox="0 0 9 10"><path d="M1 2h7M3 2V1h3v1M2 3h5v7H2z" fill="none" stroke="#7a7a7a" stroke-width="1.1"/></svg>
<svg class="a" style="left:990px;top:178px;" width="8" height="8" viewBox="0 0 8 8"><path d="M8 0L0 8M8 3L3 8M8 6L6 8" stroke="#777"/></svg>
<div class="a" style="left:835px;top:188px;width:165px;height:3px;background:#2b2b2b;"></div>
<div class="a" style="left:835px;top:191px;width:165px;height:111px;background:#535353;border:1px solid #404040"></div>
<div class="a" style="left:836px;top:192px;width:164px;height:16px;background:#3c3c3c;"></div>
<div class="a" style="left:836px;top:192px;width:54px;height:16px;background:#535353;"></div>
<span class="t" id="tx24" style="left:842px;top:195.96px;font-size:9.5px;color:#f0f0f0;font-weight:normal;transform:scaleX(0.822);">Adjustments</span>
<span class="t" id="tx25" style="left:896px;top:195.96px;font-size:9.5px;color:#a8a8a8;font-weight:normal;transform:scaleX(0.850);">Styles</span>
<svg class="a" style="left:986px;top:196px;" width="12" height="9" viewBox="0 0 12 9"><path d="M0 3h4l-2 2z" fill="#ddd"/><path d="M5 1h7M5 4h7M5 7h7" stroke="#bbb" stroke-width="1.2"/></svg>
<span class="t" id="tx26" style="left:843px;top:213.96px;font-size:9.5px;color:#f4f4f4;font-weight:bold;transform:scaleX(0.807);">Add an adjustment</span>
<svg width="0" height="0" style="position:absolute"><defs><linearGradient id="gr2" x1="0" y1="0" x2="0" y2="1"><stop offset="0" stop-color="#555"/><stop offset="1" stop-color="#bbb"/></linearGradient><linearGradient id="gr3" x1="0" y1="0" x2="1" y2="1"><stop offset="0" stop-color="#444"/><stop offset="1" stop-color="#ddd"/></linearGradient></defs></svg>
<svg class="a" style="left:869px;top:231px;" width="14" height="14" viewBox="0 0 14 14"><circle cx="7" cy="7" r="3.2" fill="none" stroke="#d0d0d0" stroke-width="1.3"/><path d="M7 3.8v6.4a3.2 3.2 0 0 0 0-6.4z" fill="#d0d0d0"/><path d="M7 0v2M7 12v2M0 7h2M12 7h2M2 2l1.4 1.4M10.6 10.6L12 12M2 12l1.4-1.4M10.6 3.4L12 2" stroke="#d0d0d0" stroke-width="1.2"/></svg>
<svg class="a" style="left:887px;top:231px;" width="14" height="14" viewBox="0 0 14 14"><path d="M1 13V8l2-3 2 3 2-4 2 4 2-3 2 3v5z" fill="#c8c8c8"/><path d="M1 13h13" stroke="#ddd" stroke-width="2"/></svg>
<svg class="a" style="left:905px;top:231px;" width="14" height="14" viewBox="0 0 14 14"><rect x="0.5" y="0.5" width="13" height="13" fill="#777" stroke="#ccc"/><path d="M1 5h12M1 9h12M5 1v12M9 1v12" stroke="#999" stroke-width=".6"/><path d="M2 12c4 0 3-10 10-10" stroke="#eee" stroke-width="1.3" fill="none"/></svg>
<svg class="a" style="left:923px;top:231px;" width="14" height="14" viewBox="0 0 14 14"><rect x="0.5" y="0.5" width="13" height="13" fill="#888" stroke="#ccc"/><path d="M1 13L13 1" stroke="#222" stroke-width="1.2"/><path d="M2 4h4M4 2v4M8 10h4" stroke="#eee" stroke-width="1.2"/></svg>
<svg class="a" style="left:941px;top:231px;" width="14" height="14" viewBox="0 0 14 14"><path d="M0.5 1h13L7 14z" fill="url(#gr2)" stroke="#ccc"/></svg>
<svg class="a" style="left:862px;top:255px;" width="14" height="14" viewBox="0 0 14 14"><rect x="0.5" y="0.5" width="13" height="13" fill="url(#gr3)" stroke="#ccc"/><path d="M3 1v5M6 1v5M9 1v5" stroke="#eee"/></svg>
<svg class="a" style="left:879px;top:255px;" width="14" height="14" viewBox="0 0 14 14"><path d="M7 1v12M3 13h8M1 4h12" stroke="#ccc" stroke-width="1.2"/><path d="M1 4l-1 5h4zM13 4l-2 5h4z" fill="#ccc"/><circle cx="7" cy="2" r="1.5" fill="#ccc"/></svg>
<svg class="a" style="left:897px;top:255px;" width="14" height="14" viewBox="0 0 14 14"><rect x="0.5" y="0.5" width="13" height="13" fill="url(#gr3)" stroke="#ccc"/><rect x="3" y="2" width="4" height="10" fill="#333"/></svg>
<svg class="a" style="left:914px;top:255px;" width="14" height="14" viewBox="0 0 14 14"><rect x="0.5" y="0.5" width="9" height="9" fill="#777" stroke="#ccc"/><circle cx="9" cy="9" r="4.5" fill="#888" stroke="#ccc"/></svg>
<svg class="a" style="left:931px;top:255px;" width="14" height="14" viewBox="0 0 14 14"><circle cx="7" cy="5" r="3.5" fill="#ccc"/><path d="M0 14c0-5 3-6 7-6s7 1 7 6z" fill="#ccc"/></svg>
<svg class="a" style="left:949px;top:255px;" width="14" height="14" viewBox="0 0 14 14"><rect x="0.5" y="0.5" width="13" height="13" fill="#666" stroke="#ccc"/><path d="M2 3h2M6 3h2M10 3h2M2 7h2M6 7h2M10 7h2M2 11h2M6 11h2M10 11h2" stroke="#eee" stroke-width="2"/></svg>
<svg class="a" style="left:871px;top:280px;" width="14" height="14" viewBox="0 0 14 14"><rect x="0.5" y="0.5" width="13" height="13" fill="#777" stroke="#ccc"/><path d="M4 11c0-5 3-8 6-8-1 3-3 7-6 8z" fill="#ddd"/></svg>
<svg class="a" style="left:888px;top:280px;" width="14" height="14" viewBox="0 0 14 14"><rect x="0.5" y="0.5" width="13" height="13" fill="#888" stroke="#ccc"/><path d="M1 11L11 1M3 13L13 3" stroke="#ddd" stroke-width="1.5"/></svg>
<svg class="a" style="left:906px;top:280px;" width="14" height="14" viewBox="0 0 14 14"><rect x="0.5" y="0.5" width="13" height="13" fill="#888" stroke="#ccc"/><path d="M1 10l3-3 3 2 6-6M1 13l4-2 3 1 5-5" stroke="#eee" stroke-width="1.5" fill="none"/></svg>
<svg class="a" style="left:924px;top:280px;" width="14" height="14" viewBox="0 0 14 14"><rect x="0.5" y="0.5" width="13" height="13" fill="#888" stroke="#ccc"/><path d="M1 1l12 12M13 1L1 13" stroke="#666" stroke-width="2"/></svg>
<svg class="a" style="left:941px;top:280px;" width="14" height="14" viewBox="0 0 14 14"><rect x="0.5" y="0.5" width="13" height="13" fill="url(#gr3)" stroke="#ccc"/></svg>
<div class="a" style="left:835px;top:302px;width:165px;height:1px;background:#2b2b2b;"></div>
<div class="a" style="left:835px;top:303px;width:165px;height:360px;background:#535353;border:1px solid #404040"></div>
<div class="a" style="left:836px;top:304px;width:164px;height:16px;background:#3c3c3c;"></div>
<div class="a" style="left:836px;top:304px;width:32px;height:16px;background:#535353;"></div>
<span class="t" id="tx27" style="left:841px;top:307.96px;font-size:9.5px;color:#f0f0f0;font-weight:bold;transform:scaleX(0.718);">Layers</span>
<span class="t" id="tx28" style="left:873px;top:307.96px;font-size:9.5px;color:#a8a8a8;font-weight:normal;transform:scaleX(0.797);">Channels</span>
<span class="t" id="tx29" style="left:915px;top:307.96px;font-size:9.5px;color:#a8a8a8;font-weight:normal;transform:scaleX(0.782);">Paths</span>
<svg class="a" style="left:986px;top:308px;" width="12" height="9" viewBox="0 0 12 9"><path d="M0 3h4l-2 2z" fill="#ddd"/><path d="M5 1h7M5 4h7M5 7h7" stroke="#bbb" stroke-width="1.2"/></svg>
<div class="a" style="left:841px;top:325px;width:49px;height:15px;background:#5a5a5a;border:1px solid #484848;border-radius:2px"></div>
<svg class="a" style="left:845px;top:328px;" width="9" height="10" viewBox="0 0 9 10"><circle cx="5.5" cy="3.5" r="3" fill="none" stroke="#aaa" stroke-width="1.1"/><path d="M3.5 5.5L0.5 9" stroke="#aaa" stroke-width="1.3"/></svg>
<span class="t" id="tx30" style="left:856px;top:327.96px;font-size:9.5px;color:#c4c4c4;font-weight:normal;transform:scaleX(0.789);">Kind</span>
<svg class="a" style="left:884px;top:328px;" width="5" height="9" viewBox="0 0 5 9"><path d="M0.5 3.5L2.5 1L4.5 3.5zM0.5 5.5L2.5 8L4.5 5.5z" fill="#bbb"/></svg>
<svg class="a" style="left:899px;top:327px;" width="12" height="12" viewBox="0 0 12 12"><rect x="0.5" y="0.5" width="11" height="11" fill="none" stroke="#888"/><path d="M2 10l3-4 2 2 2-3 2 5z" fill="#888"/></svg>
<svg class="a" style="left:917px;top:327px;" width="11" height="12" viewBox="0 0 11 12"><circle cx="5.5" cy="6" r="5" fill="#888"/><path d="M3 9l5-6" stroke="#666"/></svg>
<span class="t" id="tx31" style="left:934px;top:327.00px;font-size:13px;color:#8a8a8a;font-weight:normal;font-family:"Liberation Serif",serif;transform:scaleX(1.257);">T</span>
<svg class="a" style="left:951px;top:327px;" width="12" height="12" viewBox="0 0 12 12"><rect x="2.5" y="2.5" width="7" height="7" fill="none" stroke="#8a8a8a"/><path d="M0 2h3v-2M9 0v3h3M12 9H9v3M3 12V9H0" fill="none" stroke="#8a8a8a" stroke-width="1.2"/></svg>
<svg class="a" style="left:969px;top:326px;" width="12" height="14" viewBox="0 0 12 14"><path d="M3 6h7v8H3z" fill="#888"/><path d="M5 6V3a2 2 0 0 1 4 0" fill="none" stroke="#888" stroke-width="1.2"/></svg>
<div class="a" style="left:988px;top:326px;width:6px;height:14px;background:#3d3d3d;border:1px solid #5a5a5a"></div>
<div class="a" style="left:836px;top:343px;width:164px;height:1px;background:#404040;"></div>
<div class="a" style="left:841px;top:350px;width:79px;height:16px;background:#5a5a5a;border:1px solid #484848;border-radius:2px"></div>
<span class="t" id="tx32" style="left:845px;top:352.96px;font-size:9.5px;color:#bdbdbd;font-weight:normal;transform:scaleX(0.718);">Normal</span>
<svg class="a" style="left:913px;top:353px;" width="5" height="9" viewBox="0 0 5 9"><path d="M0.5 3.5L2.5 1L4.5 3.5zM0.5 5.5L2.5 8L4.5 5.5z" fill="#bbb"/></svg>
<span class="t" id="tx33" style="left:926px;top:352.96px;font-size:9.5px;color:#c8c8c8;font-weight:normal;transform:scaleX(0.746);">Opacity:</span>
<div class="a" style="left:957px;top:350px;width:26px;height:16px;background:#4a4a4a;border:1px solid #444"></div>
<span class="t" id="tx34" style="left:960px;top:353.38px;font-size:9px;color:#6a6a6a;font-weight:normal;transform:scaleX(0.825);">100%</span>
<div class="a" style="left:983px;top:350px;width:13px;height:16px;background:#5c5c5c;border:1px solid #444"></div>
<svg class="a" style="left:987px;top:357px;" width="5" height="3" viewBox="0 0 5 3"><path d="M0 0h5L2.5 3z" fill="#aaa"/></svg>
<div class="a" style="left:836px;top:370px;width:164px;height:1px;background:#404040;"></div>
<span class="t" id="tx35" style="left:841px;top:379.96px;font-size:9.5px;color:#c8c8c8;font-weight:normal;transform:scaleX(0.748);">Lock:</span>
<svg class="a" style="left:866px;top:379px;" width="10" height="10" viewBox="0 0 10 10"><rect x="0" y="0" width="10" height="10" fill="#707070"/><path d="M0 0h2.5v2.5H0zM5 0h2.5v2.5H5zM2.5 2.5H5V5H2.5zM7.5 2.5H10V5H7.5zM0 5h2.5v2.5H0zM5 5h2.5v2.5H5zM2.5 7.5H5V10H2.5zM7.5 7.5H10V10H7.5z" fill="#999"/></svg>
<svg class="a" style="left:880px;top:377px;" width="13" height="13" viewBox="0 0 13 13"><path d="M12 1L5 8" stroke="#999" stroke-width="1.4"/><path d="M1 12c1-3 2-4 4-4l1 1c0 2-2 3-5 3z" fill="#999"/></svg>
<svg class="a" style="left:896px;top:377px;" width="12" height="13" viewBox="0 0 12 13"><path d="M6 0v13M0 6.5h12M6 0L4 2M6 0l2 2M6 13l-2-2M6 13l2-2M0 6.5l2-2M0 6.5l2 2M12 6.5l-2-2M12 6.5l-2 2" stroke="#999" stroke-width="1.1" fill="none"/></svg>
<svg class="a" style="left:913px;top:377px;" width="9" height="13" viewBox="0 0 9 13"><path d="M1 6h7v7H1z" fill="#999"/><path d="M2.5 6V3.5a2 2 0 0 1 4 0V6" fill="none" stroke="#999" stroke-width="1.2"/></svg>
<span class="t" id="tx36" style="left:941px;top:379.96px;font-size:9.5px;color:#c8c8c8;font-weight:normal;transform:scaleX(0.744);">Fill:</span>
<div class="a" style="left:957px;top:376px;width:26px;height:16px;background:#4a4a4a;border:1px solid #444"></div>
<span class="t" id="tx37" style="left:960px;top:379.38px;font-size:9px;color:#6a6a6a;font-weight:normal;transform:scaleX(0.825);">100%</span>
<div class="a" style="left:983px;top:376px;width:13px;height:16px;background:#5c5c5c;border:1px solid #444"></div>
<svg class="a" style="left:987px;top:383px;" width="5" height="3" viewBox="0 0 5 3"><path d="M0 0h5L2.5 3z" fill="#aaa"/></svg>
<div class="a" style="left:836px;top:396px;width:164px;height:1px;background:#404040;"></div>
<div class="a" style="left:836px;top:397px;width:152px;height:29px;background:#535353;"></div>
<div class="a" style="left:860px;top:398px;width:128px;height:28px;background:#5a6a84;"></div>
<svg class="a" style="left:843px;top:406px;" width="10" height="8" viewBox="0 0 10 8"><path d="M0 4c2-3 8-3 10 0-2 3-8 3-10 0z" fill="#ccc"/><circle cx="5" cy="4" r="2" fill="#333"/></svg>
<div class="a" style="left:861px;top:400px;width:24px;height:21px;background:#ffffff;border:1px solid #222"></div>
<span class="t" id="tx38" style="left:893px;top:407.54px;font-size:10px;color:#e8ecf2;font-weight:normal;font-style:italic;transform:scaleX(0.731);">Background</span>
<svg class="a" style="left:967px;top:406px;" width="10" height="12" viewBox="0 0 10 12"><path d="M1 5h8v7H1z" fill="none" stroke="#ddd" stroke-width="1.1"/><path d="M2.5 5V3a2.5 2.5 0 0 1 5 0v2" fill="none" stroke="#ddd" stroke-width="1.1"/></svg>
<div class="a" style="left:836px;top:426px;width:152px;height:220px;background:#474747;"></div>
<div class="a" style="left:988px;top:397px;width:11px;height:249px;background:#454545;border-left:1px solid #383838"></div>
<div class="a" style="left:836px;top:646px;width:163px;height:16px;background:#535353;border-top:1px solid #444"></div>
<svg class="a" style="left:849px;top:650px;" width="12" height="11" viewBox="0 0 12 11"><path d="M4 2H2a3 3 0 0 0 0 6h2M8 2h2a3 3 0 0 1 0 6H8M4 5h4" stroke="#999" fill="none" stroke-width="1.2"/></svg>
<svg class="a" style="left:869px;top:650px;" width="12" height="11" viewBox="0 0 12 11"><text x="0" y="9" font-family="Liberation Serif" font-style="italic" font-size="11" fill="#999">fx</text></svg>
<svg class="a" style="left:889px;top:650px;" width="12" height="11" viewBox="0 0 12 11"><rect x="0" y="0" width="11" height="10" fill="#c8c8c8"/><circle cx="5.5" cy="5" r="2.5" fill="#333"/></svg>
<svg class="a" style="left:909px;top:650px;" width="12" height="11" viewBox="0 0 12 11"><circle cx="5" cy="5" r="4.5" fill="#ccc"/><path d="M2 8L8 2" stroke="#444"/><path d="M9 8l2 0-1 2z" fill="#ccc"/></svg>
<svg class="a" style="left:929px;top:650px;" width="12" height="11" viewBox="0 0 12 11"><path d="M0 2h4l1 1h6v7H0z" fill="#c8c8c8"/></svg>
<svg class="a" style="left:948px;top:650px;" width="12" height="11" viewBox="0 0 12 11"><path d="M0 2h8l3 3v6H0z" fill="#d0d0d0"/><path d="M3 5h4v4" fill="none" stroke="#555"/></svg>
<svg class="a" style="left:968px;top:650px;" width="12" height="11" viewBox="0 0 12 11"><path d="M1 2h9M4 2V1h3v1M2 3h7v8H2z" fill="none" stroke="#777" stroke-width="1.1"/></svg>
<div class="a" style="left:228px;top:55px;width:434px;height:588px;background:#ffffff;border:1px solid #a8a8a8;box-shadow:0 0 2px rgba(0,0,0,.25)"></div>
<svg class="a" style="left:236px;top:61px;" width="12" height="13" viewBox="0 0 12 13"><rect x="0" y="0" width="12" height="13" fill="#0d1f55"/><rect x="0.5" y="0.5" width="11" height="12" fill="none" stroke="#3a5fa8" stroke-width=".8"/><text x="1.6" y="9.5" font-family="Liberation Sans" font-weight="bold" font-size="7.5" fill="#9fc6f5">Ps</text></svg>
<span class="t" id="tx39" style="left:432px;top:62.07px;font-size:13.5px;color:#3c3c3c;font-weight:normal;transform:scaleX(0.787);">Open</span>
<div class="a" style="left:634px;top:56px;width:22px;height:18px;background:#c7504f;"></div>
<svg class="a" style="left:641px;top:61px;" width="8" height="8" viewBox="0 0 8 8"><path d="M0.5 0.5L7.5 7.5M7.5 0.5L0.5 7.5" stroke="#fff" stroke-width="1.5"/></svg>
<div class="a" style="left:233px;top:82px;width:423px;height:554px;background:#f0f0f0;border:1px solid #d6d6d6"></div>
<span class="t" id="tx40" style="left:278px;top:101.11px;font-size:10.5px;color:#1e1e1e;font-weight:normal;transform:scaleX(0.761);-webkit-text-stroke:0.25px #1e1e1e;">Look in:</span>
<div class="a" style="left:311px;top:96px;width:191px;height:20px;background:#ffffff;border:1px solid #abadb3"></div>
<svg class="a" style="left:315px;top:100px;" width="12" height="13" viewBox="0 0 12 13"><path d="M1 2h4l1 1h5v9H1z" fill="#e8c35a"/><path d="M1 4h10v8H1z" fill="#f5d77a"/><path d="M4 3v9" stroke="#d9ad3a"/></svg>
<span class="t" id="tx41" style="left:330px;top:101.11px;font-size:10.5px;color:#1e1e1e;font-weight:normal;transform:scaleX(0.794);-webkit-text-stroke:0.25px #1e1e1e;">teger</span>
<svg class="a" style="left:493px;top:104px;" width="7" height="5" viewBox="0 0 7 5"><path d="M0.5 0.5L3.5 3.5L6.5 0.5" stroke="#333" stroke-width="1.3" fill="none"/></svg>
<svg class="a" style="left:512px;top:98px;" width="14" height="14" viewBox="0 0 14 14"><defs><radialGradient id="bk" cx=".4" cy=".35" r=".7"><stop offset="0" stop-color="#bbb"/><stop offset="1" stop-color="#444"/></radialGradient></defs><circle cx="7" cy="7" r="6.5" fill="url(#bk)"/><path d="M10 7H4M6.5 4L3.5 7l3 3" stroke="#fff" stroke-width="1.6" fill="none"/></svg>
<svg class="a" style="left:529px;top:97px;" width="13" height="17" viewBox="0 0 13 17"><path d="M1 7h9v9H1z" fill="#f0cf5c"/><path d="M1 7l4-2v11l-4-1z" fill="#e0b040"/><path d="M8 13V4M5 6l3-4 3 4" stroke="#2aa52a" stroke-width="2.5" fill="none"/></svg>
<svg class="a" style="left:546px;top:99px;" width="14" height="14" viewBox="0 0 14 14"><path d="M1 4h4l1 1h6v8H1z" fill="#f0cf5c"/><path d="M1 5l3-1v9l-3-1z" fill="#d8a83a"/><circle cx="11" cy="3" r="2.3" fill="#f07030"/></svg>
<svg class="a" style="left:563px;top:99px;" width="22" height="14" viewBox="0 0 22 14"><rect x="1" y="1" width="12" height="12" fill="#fff" stroke="#2a6fd0" stroke-width="1.3"/><rect x="1" y="1" width="12" height="3" fill="#2a6fd0"/><path d="M4 6v1M7 6v1M10 6v1M4 9v1M7 9v1M10 9v1" stroke="#4a4a8a" stroke-width="1.5"/><path d="M15 5h6l-3 3z" fill="#111"/></svg>
<svg class="a" style="left:625px;top:98px;" width="13" height="14" viewBox="0 0 13 14"><path d="M0.5 2.5h4l1 1.5h7v9.5h-12z" fill="#f5f07a" stroke="#111" stroke-width="1"/><circle cx="6.5" cy="8.5" r="2" fill="#222"/></svg>
<div class="a" style="left:241px;top:121px;width:67px;height:460px;background:#f3f3f3;border:1px solid #ededed"></div>
<svg class="a" style="left:262px;top:128px;" width="24" height="29" viewBox="0 0 24 29"><defs><linearGradient id="rpb" x1="0" y1="0" x2="1" y2="1"><stop offset="0" stop-color="#c8e4f8"/><stop offset=".5" stop-color="#3a8ad8"/><stop offset="1" stop-color="#1a5a98"/></linearGradient></defs><rect x="9.5" y="4.5" width="12" height="18" fill="#f8f8f8" stroke="#b8c0c8"/><path d="M12 8h7M12 11h7" stroke="#9ab" stroke-width=".8"/><circle cx="7" cy="8" r="6" fill="#dde6ee" stroke="#8a9aaa"/><path d="M7 4v4h3" stroke="#556" stroke-width="1" fill="none"/><path d="M4 22c0-6 4-9 9-9 3 0 5 2 5 4-3-1-6 0-7 3 3-1 6 0 7 2-2 3-8 4-14 0z" fill="url(#rpb)"/><path d="M1 23l4 5h18l-3-6h-3l-9 4z" fill="#8a929a"/><path d="M4 28h19v1H4z" fill="#c0c4c8"/></svg>
<span class="t" id="tx42" style="left:248.4px;top:159.71px;font-size:10.5px;color:#1e1e1e;font-weight:normal;transform:scaleX(0.790);-webkit-text-stroke:0.25px #1e1e1e;">Recent places</span>
<svg class="a" style="left:263px;top:189px;" width="23" height="22" viewBox="0 0 23 22"><defs><linearGradient id="dsk" x1="0" y1="0" x2="1" y2="1"><stop offset="0" stop-color="#78b8f8"/><stop offset=".45" stop-color="#3a78d8"/><stop offset="1" stop-color="#1a48a8"/></linearGradient></defs><rect x="0.5" y="0.5" width="22" height="20" fill="url(#dsk)" stroke="#5a7ab0"/><path d="M2 15L12 2h3L5 15z" fill="#fff" opacity=".15"/><rect x="1" y="16" width="21" height="4" fill="#7a8ca8"/><rect x="1" y="16" width="21" height="1" fill="#b8c8e0"/></svg>
<span class="t" id="tx43" style="left:259.6px;top:214.11px;font-size:10.5px;color:#1e1e1e;font-weight:normal;transform:scaleX(0.789);-webkit-text-stroke:0.25px #1e1e1e;">Desktop</span>
<svg class="a" style="left:262px;top:239px;" width="24" height="26" viewBox="0 0 24 26"><path d="M1 3h8l2 2h12v17H1z" fill="#e8b840"/><path d="M1 7h22v15H1z" fill="#f8e08a"/><rect x="5" y="1" width="3" height="4" fill="#3a9a3a"/><rect x="14" y="2" width="4" height="3" fill="#c04040"/><path d="M4 14h16v8H4z" fill="#5ab0e8"/><path d="M8 17h8v5H8z" fill="#d8eaf8"/></svg>
<span class="t" id="tx44" style="left:259px;top:268.51px;font-size:10.5px;color:#1e1e1e;font-weight:normal;transform:scaleX(0.787);-webkit-text-stroke:0.25px #1e1e1e;">Libraries</span>
<svg class="a" style="left:262px;top:294px;" width="24" height="25" viewBox="0 0 24 25"><rect x="8" y="1" width="15" height="14" fill="#1e3ea8" stroke="#9ab" stroke-width="1"/><path d="M10 3l10 10H10z" fill="#2a6ae0"/><rect x="1" y="5" width="8" height="14" fill="#d8dee4" stroke="#889"/><ellipse cx="15" cy="20" rx="7" ry="3" fill="#c8ccd0"/></svg>
<span class="t" id="tx45" style="left:260.3px;top:323.11px;font-size:10.5px;color:#1e1e1e;font-weight:normal;transform:scaleX(0.763);-webkit-text-stroke:0.25px #1e1e1e;">This PC</span>
<svg class="a" style="left:261px;top:346px;" width="26" height="28" viewBox="0 0 26 28"><circle cx="11" cy="11" r="10" fill="#2a8ad8"/><path d="M3 8c4-2 6 2 9 0s2-6 5-6M5 16c3-2 6 1 8 4" stroke="#40b040" stroke-width="3" fill="none"/><rect x="11" y="10" width="14" height="12" fill="#1e3ea8" stroke="#9ab"/><path d="M13 12l9 8h-9z" fill="#3a7ae8"/><ellipse cx="18" cy="25" rx="6" ry="2.5" fill="#c8ccd0"/></svg>
<span class="t" id="tx46" style="left:259px;top:378.11px;font-size:10.5px;color:#1e1e1e;font-weight:normal;transform:scaleX(0.844);-webkit-text-stroke:0.25px #1e1e1e;">Network</span>
<div class="a" style="left:310px;top:121px;width:331px;height:410px;background:#ffffff;"></div>
<div class="a" style="left:629px;top:121px;width:12px;height:410px;background:#f0f0f0;"></div>
<div class="a" style="left:630px;top:138px;width:10px;height:188px;background:#cdcdcd;"></div>
<svg class="a" style="left:630px;top:126px;" width="9" height="6" viewBox="0 0 9 6"><path d="M1 5L4.5 1.5L8 5" stroke="#555" stroke-width="1.6" fill="none"/></svg>
<svg class="a" style="left:630px;top:520px;" width="9" height="6" viewBox="0 0 9 6"><path d="M1 1L4.5 4.5L8 1" stroke="#555" stroke-width="1.6" fill="none"/></svg>
<div class="a" style="left:545px;top:126px;width:77px;height:135px;background:#cce8fa;border:1px solid #5cb0e6"></div>
<div class="a" style="left:319px;top:143px;width:66px;height:69px;background:radial-gradient(ellipse at 45% 45%,#3e3030 0,#2a2020 60%,#221a1a 100%);overflow:hidden;box-shadow:1px 1px 2px rgba(0,0,0,.25);"><svg class="a" style="left:0;top:0" width="66" height="69"><defs><filter id="bl1"><feGaussianBlur stdDeviation=".6"/></filter></defs><g filter="url(#bl1)"><ellipse cx="11" cy="31" rx="9" ry="6.5" fill="#a0a0a0"/><ellipse cx="8" cy="35" rx="5" ry="3" fill="#6a6a6a"/><path d="M44 36l-8 2-6-4-6 2-4 8 7 3 8-3 5 4 4-6z" fill="#601820"/><path d="M44 34l12-2 3 10-8 6-7-4z" fill="#4a1a22"/><path d="M18 30l8 4 4-8 4 10 8 4-8 3-2 9-6-6-8 2 3-7z" fill="#d01e2a"/><path d="M20 42l8-2 2 4-6 2z" fill="#f0e0e0"/><circle cx="44" cy="29" r="5" fill="#e6e6e6"/><circle cx="40" cy="26" r="2.5" fill="#cfcfcf"/><circle cx="48" cy="32" r="2.5" fill="#d8d8d8"/><circle cx="52" cy="18" r="5" fill="none" stroke="#8a7070" stroke-width="1.3"/><path d="M47 18c-1 4 0 8 1 10M54 44c4 4 2 12-2 14" stroke="#7a6060" stroke-width="1.2" fill="none"/><path d="M62 30l4 3-4 3z" fill="#e8e8e8"/></g></svg></div>
<div class="a" style="left:406px;top:130px;width:45px;height:82px;background:linear-gradient(180deg,#e0a8b8 0,#d8a0b0 50%,#a0a880 65%,#7a9a68 100%);overflow:hidden;box-shadow:1px 1px 2px rgba(0,0,0,.25);"><svg class="a" style="left:0;top:0" width="45" height="82"><path d="M34 0h8v20c-2 10-3 30-1 62h-5c-2-30 0-50 2-62z" fill="#1e4a2a"/><path d="M0 52c8-4 18-2 30 4v26H0z" fill="#7a9868" opacity=".55"/><ellipse cx="12.2" cy="9.5" rx="2.8" ry="2.2" fill="#f4c4d0"/><ellipse cx="35.6" cy="4.8" rx="2.7" ry="2.1" fill="#f0b8c8"/><ellipse cx="7.1" cy="4.1" rx="2.3" ry="1.9" fill="#eab0c0"/><ellipse cx="1.3" cy="32.2" rx="3.2" ry="2.5" fill="#f4c4d0"/><ellipse cx="41.5" cy="49.3" rx="2.7" ry="2.1" fill="#f4c4d0"/><ellipse cx="24.1" cy="29.9" rx="3.5" ry="2.8" fill="#f4c4d0"/><ellipse cx="23.2" cy="8.1" rx="2.3" ry="1.9" fill="#f0b8c8"/><ellipse cx="2.5" cy="22.6" rx="3.1" ry="2.5" fill="#eab0c0"/><ellipse cx="1.8" cy="44.4" rx="1.9" ry="1.5" fill="#f4c4d0"/><ellipse cx="22.7" cy="2.2" rx="1.6" ry="1.3" fill="#eab0c0"/><ellipse cx="20.3" cy="41.1" rx="3.1" ry="2.4" fill="#d898a8"/><ellipse cx="24.5" cy="34.6" rx="2.1" ry="1.7" fill="#c88898"/><ellipse cx="5.4" cy="61.7" rx="1.7" ry="1.3" fill="#5a8a48"/><ellipse cx="38.1" cy="57.5" rx="2.1" ry="1.7" fill="#f4c4d0"/><ellipse cx="21.1" cy="10.7" rx="2.2" ry="1.7" fill="#d898a8"/><ellipse cx="16.8" cy="76.8" rx="1.7" ry="1.3" fill="#c88898"/><ellipse cx="38.1" cy="23.0" rx="2.9" ry="2.3" fill="#f0b8c8"/><ellipse cx="20.3" cy="63.1" rx="1.6" ry="1.3" fill="#5a8a48"/><ellipse cx="19.3" cy="52.1" rx="1.6" ry="1.3" fill="#e8a8b8"/><ellipse cx="11.6" cy="45.0" rx="2.9" ry="2.3" fill="#d898a8"/><ellipse cx="10.4" cy="29.0" rx="2.8" ry="2.3" fill="#f4c4d0"/><ellipse cx="41.2" cy="26.5" rx="2.7" ry="2.2" fill="#d898a8"/><ellipse cx="-0.2" cy="60.8" rx="1.8" ry="1.4" fill="#5a8a48"/><ellipse cx="40.1" cy="38.2" rx="1.8" ry="1.5" fill="#d898a8"/><ellipse cx="22.8" cy="70.3" rx="3.1" ry="2.5" fill="#f8d8e0"/><ellipse cx="30.2" cy="78.9" rx="2.9" ry="2.3" fill="#7aa060"/><ellipse cx="4.1" cy="11.6" rx="2.0" ry="1.6" fill="#eab0c0"/><ellipse cx="-2.4" cy="66.0" rx="1.9" ry="1.5" fill="#7aa060"/><ellipse cx="16.7" cy="27.6" rx="2.6" ry="2.1" fill="#eab0c0"/><ellipse cx="29.5" cy="39.8" rx="2.7" ry="2.2" fill="#e8a8b8"/><ellipse cx="31.8" cy="34.9" rx="3.2" ry="2.6" fill="#c88898"/><ellipse cx="29.0" cy="43.4" rx="2.3" ry="1.8" fill="#d898a8"/><ellipse cx="1.9" cy="49.6" rx="1.6" ry="1.3" fill="#f4c4d0"/><ellipse cx="43.3" cy="33.6" rx="1.7" ry="1.4" fill="#f0b8c8"/><ellipse cx="-0.5" cy="-3.0" rx="1.8" ry="1.4" fill="#f4c4d0"/><ellipse cx="41.6" cy="47.9" rx="1.6" ry="1.3" fill="#eab0c0"/><ellipse cx="25.9" cy="9.3" rx="2.0" ry="1.6" fill="#f8d8e0"/><ellipse cx="25.3" cy="36.4" rx="1.7" ry="1.4" fill="#d898a8"/><ellipse cx="43.7" cy="35.7" rx="2.5" ry="2.0" fill="#f4c4d0"/><ellipse cx="3.8" cy="59.2" rx="3.0" ry="2.4" fill="#e8a8b8"/><ellipse cx="4.6" cy="-1.1" rx="3.4" ry="2.7" fill="#f0b8c8"/><ellipse cx="14.0" cy="54.3" rx="3.3" ry="2.7" fill="#c88898"/><ellipse cx="21.8" cy="78.2" rx="3.2" ry="2.6" fill="#f8d8e0"/><ellipse cx="21.4" cy="72.4" rx="2.2" ry="1.8" fill="#90b078"/><ellipse cx="33.6" cy="24.4" rx="1.9" ry="1.6" fill="#c88898"/><ellipse cx="34.1" cy="59.9" rx="1.9" ry="1.5" fill="#5a8a48"/><ellipse cx="31.8" cy="15.8" rx="2.5" ry="2.0" fill="#f8d8e0"/><ellipse cx="31.4" cy="79.1" rx="3.1" ry="2.5" fill="#eab0c0"/><ellipse cx="29.5" cy="76.4" rx="2.4" ry="1.9" fill="#f8d8e0"/><ellipse cx="41.9" cy="27.3" rx="1.9" ry="1.6" fill="#eab0c0"/><ellipse cx="19.1" cy="25.0" rx="2.5" ry="2.0" fill="#f0b8c8"/><ellipse cx="36.5" cy="36.8" rx="2.8" ry="2.2" fill="#c88898"/><ellipse cx="27.2" cy="66.3" rx="1.7" ry="1.4" fill="#90b078"/><ellipse cx="32.3" cy="36.7" rx="1.9" ry="1.5" fill="#c88898"/><ellipse cx="26.9" cy="4.2" rx="3.4" ry="2.7" fill="#e8a8b8"/><ellipse cx="15.6" cy="30.3" rx="3.4" ry="2.7" fill="#e8a8b8"/><ellipse cx="4.5" cy="79.4" rx="1.6" ry="1.2" fill="#d898a8"/><ellipse cx="34.9" cy="9.1" rx="3.2" ry="2.5" fill="#d898a8"/><ellipse cx="27.9" cy="26.1" rx="2.6" ry="2.1" fill="#eab0c0"/><ellipse cx="-2.0" cy="63.3" rx="3.0" ry="2.4" fill="#90b078"/><ellipse cx="40.9" cy="33.0" rx="3.2" ry="2.6" fill="#c88898"/><ellipse cx="38.1" cy="-0.7" rx="1.9" ry="1.5" fill="#f0b8c8"/><ellipse cx="8.3" cy="45.7" rx="2.0" ry="1.6" fill="#d898a8"/><ellipse cx="36.2" cy="2.1" rx="3.0" ry="2.4" fill="#d898a8"/><ellipse cx="28.1" cy="64.6" rx="2.5" ry="2.0" fill="#f0b8c8"/><ellipse cx="3.1" cy="9.6" rx="2.5" ry="2.0" fill="#c88898"/><ellipse cx="17.7" cy="12.2" rx="1.5" ry="1.2" fill="#c88898"/><ellipse cx="4.0" cy="8.7" rx="2.7" ry="2.2" fill="#f4c4d0"/><ellipse cx="23.2" cy="24.1" rx="2.5" ry="2.0" fill="#f0b8c8"/><ellipse cx="19.7" cy="61.4" rx="3.3" ry="2.6" fill="#7aa060"/><ellipse cx="10.0" cy="61.1" rx="2.5" ry="2.0" fill="#c88898"/><ellipse cx="39.0" cy="2.3" rx="2.2" ry="1.7" fill="#f0b8c8"/><ellipse cx="25.5" cy="13.6" rx="2.1" ry="1.6" fill="#f0b8c8"/><ellipse cx="22.1" cy="36.7" rx="3.4" ry="2.7" fill="#e8a8b8"/><ellipse cx="21.6" cy="69.7" rx="3.4" ry="2.7" fill="#eab0c0"/><ellipse cx="36.5" cy="8.4" rx="1.7" ry="1.4" fill="#d898a8"/><ellipse cx="11.9" cy="52.7" rx="2.4" ry="1.9" fill="#eab0c0"/><ellipse cx="28.5" cy="62.1" rx="3.3" ry="2.6" fill="#90b078"/><ellipse cx="27.2" cy="27.4" rx="2.0" ry="1.6" fill="#eab0c0"/><ellipse cx="42.5" cy="15.2" rx="3.4" ry="2.7" fill="#d898a8"/><ellipse cx="38.6" cy="10.5" rx="2.8" ry="2.3" fill="#eab0c0"/><ellipse cx="4.6" cy="32.8" rx="2.5" ry="2.0" fill="#f8d8e0"/><ellipse cx="16.8" cy="26.6" rx="1.7" ry="1.3" fill="#f8d8e0"/><ellipse cx="-2.1" cy="43.0" rx="2.4" ry="1.9" fill="#f4c4d0"/><ellipse cx="15.1" cy="39.9" rx="2.1" ry="1.7" fill="#f4c4d0"/><ellipse cx="2.3" cy="73.2" rx="2.0" ry="1.6" fill="#f4c4d0"/><ellipse cx="9.5" cy="0.3" rx="3.1" ry="2.4" fill="#f8d8e0"/><ellipse cx="32.5" cy="65.0" rx="3.2" ry="2.6" fill="#f8d8e0"/><ellipse cx="16.1" cy="41.5" rx="2.5" ry="2.0" fill="#d898a8"/><ellipse cx="29.9" cy="4.4" rx="1.6" ry="1.3" fill="#e8a8b8"/><ellipse cx="5.6" cy="71.3" rx="2.0" ry="1.6" fill="#7aa060"/><ellipse cx="34.7" cy="4.0" rx="3.2" ry="2.6" fill="#f4c4d0"/><ellipse cx="9.4" cy="7.1" rx="1.5" ry="1.2" fill="#f0b8c8"/><ellipse cx="16.6" cy="73.0" rx="2.7" ry="2.2" fill="#90b078"/><ellipse cx="8.2" cy="6.1" rx="1.8" ry="1.5" fill="#f4c4d0"/><ellipse cx="5.5" cy="74.4" rx="2.8" ry="2.2" fill="#eab0c0"/><ellipse cx="10.6" cy="38.5" rx="1.9" ry="1.5" fill="#f8d8e0"/><ellipse cx="34.8" cy="79.5" rx="1.6" ry="1.3" fill="#90b078"/><ellipse cx="22.9" cy="12.7" rx="2.4" ry="2.0" fill="#d898a8"/><ellipse cx="2.0" cy="65.0" rx="2.4" ry="1.9" fill="#c88898"/><ellipse cx="38.8" cy="77.5" rx="2.1" ry="1.7" fill="#7aa060"/><ellipse cx="13.1" cy="66.1" rx="2.9" ry="2.3" fill="#d898a8"/><ellipse cx="43.5" cy="78.5" rx="3.2" ry="2.5" fill="#90b078"/><ellipse cx="31.8" cy="18.2" rx="1.8" ry="1.5" fill="#f4c4d0"/><ellipse cx="28.3" cy="28.6" rx="2.5" ry="2.0" fill="#f8d8e0"/><ellipse cx="25.1" cy="54.5" rx="1.6" ry="1.3" fill="#eab0c0"/><ellipse cx="4.4" cy="34.0" rx="2.0" ry="1.6" fill="#f8d8e0"/><ellipse cx="42.7" cy="42.4" rx="2.0" ry="1.6" fill="#f8d8e0"/><ellipse cx="7.2" cy="12.2" rx="2.2" ry="1.7" fill="#f4c4d0"/><ellipse cx="19.3" cy="38.7" rx="1.9" ry="1.5" fill="#f0b8c8"/><path d="M31.0 6.4l3.2 3.7" stroke="#4a3a3a" stroke-width=".8"/><path d="M23.5 27.6l-2.0 6.1" stroke="#4a3a3a" stroke-width=".8"/><path d="M3.4 67.0l3.5 3.8" stroke="#4a3a3a" stroke-width=".8"/><path d="M35.7 54.9l1.0 6.8" stroke="#4a3a3a" stroke-width=".8"/><path d="M28.8 34.6l-2.2 6.1" stroke="#4a3a3a" stroke-width=".8"/><path d="M5.8 57.7l2.2 5.6" stroke="#4a3a3a" stroke-width=".8"/><path d="M17.2 49.1l0.1 7.5" stroke="#4a3a3a" stroke-width=".8"/><path d="M30.1 39.8l3.1 3.1" stroke="#4a3a3a" stroke-width=".8"/><path d="M27.5 55.9l2.1 7.8" stroke="#4a3a3a" stroke-width=".8"/><path d="M25.7 6.0l-4.6 6.2" stroke="#4a3a3a" stroke-width=".8"/></svg></div>
<div class="a" style="left:481px;top:130px;width:48px;height:82px;background:linear-gradient(180deg,#d4e8f4 0,#e4f0f8 12%,#c8e0f0 20%,#d8e8f4 26%,#a8c0e0 40%,#9ab4dc 55%,#c8dcf0 62%,#e0eef8 70%,#d4e8f4 85%,#e0eef8 100%);overflow:hidden;box-shadow:1px 1px 2px rgba(0,0,0,.25);"><svg class="a" style="left:0;top:0" width="48" height="82" viewBox="0 0 48 82"><defs><linearGradient id="tr" x1="0" y1="0" x2="0" y2="1"><stop offset="0" stop-color="#505a78"/><stop offset=".45" stop-color="#6a4a3c"/><stop offset="1" stop-color="#6a4838"/></linearGradient><linearGradient id="rf" x1="0" y1="0" x2="0" y2="1"><stop offset="0" stop-color="#6a4a40"/><stop offset="1" stop-color="#5a6a90"/></linearGradient></defs><path d="M0 32 L1.6 20.5 L3.2 30.8 L4.8 25.2 L6.4 30.3 L8.0 21.1 L9.6 30.9 L11.2 17.8 L12.8 30.6 L14.4 22.3 L16.0 32.0 L17.6 16.9 L19.2 29.5 L20.8 16.9 L22.4 32.0 L24.0 22.9 L25.6 28.2 L27.2 25.8 L28.8 32.8 L30.4 22.5 L32.0 31.1 L33.6 17.6 L35.2 28.1 L36.8 21.3 L38.4 28.3 L40.0 17.9 L41.6 29.2 L43.2 16.3 L44.8 30.3 L46.4 20.4 L48.0 32.2 L48 45 L0 45 Z" fill="url(#tr)"/><path d="M0 44 L1.6 54.2 L3.2 47.9 L4.8 54.0 L6.4 48.0 L8.0 53.7 L9.6 46.8 L11.2 58.0 L12.8 49.0 L14.4 56.7 L16.0 48.1 L17.6 52.5 L19.2 46.7 L20.8 52.3 L22.4 46.2 L24.0 56.1 L25.6 47.2 L27.2 56.8 L28.8 47.2 L30.4 57.7 L32.0 48.5 L33.6 50.0 L35.2 46.6 L36.8 57.3 L38.4 47.4 L40.0 57.8 L41.6 47.2 L43.2 50.6 L44.8 47.9 L46.4 56.2 L48.0 46.8 L48 44 Z" fill="url(#rf)" opacity=".9"/></svg></div>
<div class="a" style="left:548px;top:129px;width:68px;height:83px;background:linear-gradient(160deg,#f6c8e0 0,#f8e0d0 25%,#f8f0b8 50%,#d8f0d8 75%,#b8e8f8 100%);overflow:hidden;box-shadow:1px 1px 2px rgba(0,0,0,.25);"><svg class="a" style="left:0;top:0" width="68" height="83" viewBox="0 0 68 83"><defs><linearGradient id="wf" x1="0" y1="0" x2="0" y2="1"><stop offset="0" stop-color="#80e0f0"/><stop offset=".3" stop-color="#e070c0"/><stop offset=".55" stop-color="#f06080"/><stop offset=".75" stop-color="#9060e0"/><stop offset="1" stop-color="#6040b0"/></linearGradient></defs><rect x="15.5" y="3.5" width="36" height="76" fill="#f8f4f0" stroke="#e8e0d8" stroke-width="1"/><rect x="18" y="7" width="31" height="15" fill="#eef6fa"/><ellipse cx="33" cy="17" rx="10" ry="4" fill="#9cd8f0"/><ellipse cx="30" cy="15" rx="5" ry="2.5" fill="#7ab0e0"/><path d="M18 21L26 26L41 26L49 21L49 74L18 74Z" fill="#5a3e3e"/><path d="M26 24L41 24L44 74L22 74Z" fill="url(#wf)" opacity=".9"/><path d="M28 30L32 60L30 74M36 30L38 55" stroke="#fff" stroke-width="1.5" opacity=".6" fill="none"/></svg></div>
<div class="a" style="left:319px;top:265px;width:65px;height:82px;background:linear-gradient(160deg,#f8c8e8 0,#f8f0c8 45%,#e8f4d8 65%,#c0e4f8 100%);overflow:hidden;box-shadow:1px 1px 2px rgba(0,0,0,.25);"><svg class="a" style="left:0;top:0" width="65" height="82"><rect x="14.5" y="3.5" width="36" height="76" fill="#f8f6f4" stroke="#e8e4e0"/><rect x="16" y="8" width="33" height="68" fill="#f0e8e8"/><polyline points="16.0,9.0 18.5,11.2 21.0,9.0 23.5,11.2 26.0,9.0 28.5,11.2 31.0,9.0 33.5,11.2 36.0,9.0 38.5,11.2 41.0,9.0 43.5,11.2 46.0,9.0 48.5,11.2" fill="none" stroke="#e868a0" stroke-width="2.4"/><polyline points="16.0,12.8 18.5,15.0 21.0,12.8 23.5,15.0 26.0,12.8 28.5,15.0 31.0,12.8 33.5,15.0 36.0,12.8 38.5,15.0 41.0,12.8 43.5,15.0 46.0,12.8 48.5,15.0" fill="none" stroke="#78c8e0" stroke-width="2.4"/><polyline points="16.0,16.6 18.5,18.8 21.0,16.6 23.5,18.8 26.0,16.6 28.5,18.8 31.0,16.6 33.5,18.8 36.0,16.6 38.5,18.8 41.0,16.6 43.5,18.8 46.0,16.6 48.5,18.8" fill="none" stroke="#f4e878" stroke-width="2.4"/><polyline points="16.0,20.4 18.5,22.6 21.0,20.4 23.5,22.6 26.0,20.4 28.5,22.6 31.0,20.4 33.5,22.6 36.0,20.4 38.5,22.6 41.0,20.4 43.5,22.6 46.0,20.4 48.5,22.6" fill="none" stroke="#a8d888" stroke-width="2.4"/><polyline points="16.0,24.2 18.5,26.4 21.0,24.2 23.5,26.4 26.0,24.2 28.5,26.4 31.0,24.2 33.5,26.4 36.0,24.2 38.5,26.4 41.0,24.2 43.5,26.4 46.0,24.2 48.5,26.4" fill="none" stroke="#f08cb8" stroke-width="2.4"/><polyline points="16.0,28.0 18.5,30.2 21.0,28.0 23.5,30.2 26.0,28.0 28.5,30.2 31.0,28.0 33.5,30.2 36.0,28.0 38.5,30.2 41.0,28.0 43.5,30.2 46.0,28.0 48.5,30.2" fill="none" stroke="#80d0e8" stroke-width="2.4"/><polyline points="16.0,31.8 18.5,34.0 21.0,31.8 23.5,34.0 26.0,31.8 28.5,34.0 31.0,31.8 33.5,34.0 36.0,31.8 38.5,34.0 41.0,31.8 43.5,34.0 46.0,31.8 48.5,34.0" fill="none" stroke="#f8ec80" stroke-width="2.4"/><polyline points="16.0,35.6 18.5,37.8 21.0,35.6 23.5,37.8 26.0,35.6 28.5,37.8 31.0,35.6 33.5,37.8 36.0,35.6 38.5,37.8 41.0,35.6 43.5,37.8 46.0,35.6 48.5,37.8" fill="none" stroke="#c0a0e0" stroke-width="2.4"/><polyline points="16.0,39.4 18.5,41.6 21.0,39.4 23.5,41.6 26.0,39.4 28.5,41.6 31.0,39.4 33.5,41.6 36.0,39.4 38.5,41.6 41.0,39.4 43.5,41.6 46.0,39.4 48.5,41.6" fill="none" stroke="#e868a0" stroke-width="2.4"/><polyline points="16.0,43.2 18.5,45.4 21.0,43.2 23.5,45.4 26.0,43.2 28.5,45.4 31.0,43.2 33.5,45.4 36.0,43.2 38.5,45.4 41.0,43.2 43.5,45.4 46.0,43.2 48.5,45.4" fill="none" stroke="#78c8e0" stroke-width="2.4"/><polyline points="16.0,47.0 18.5,49.2 21.0,47.0 23.5,49.2 26.0,47.0 28.5,49.2 31.0,47.0 33.5,49.2 36.0,47.0 38.5,49.2 41.0,47.0 43.5,49.2 46.0,47.0 48.5,49.2" fill="none" stroke="#f4e878" stroke-width="2.4"/><polyline points="16.0,50.8 18.5,53.0 21.0,50.8 23.5,53.0 26.0,50.8 28.5,53.0 31.0,50.8 33.5,53.0 36.0,50.8 38.5,53.0 41.0,50.8 43.5,53.0 46.0,50.8 48.5,53.0" fill="none" stroke="#a8d888" stroke-width="2.4"/><polyline points="16.0,54.6 18.5,56.8 21.0,54.6 23.5,56.8 26.0,54.6 28.5,56.8 31.0,54.6 33.5,56.8 36.0,54.6 38.5,56.8 41.0,54.6 43.5,56.8 46.0,54.6 48.5,56.8" fill="none" stroke="#f08cb8" stroke-width="2.4"/><polyline points="16.0,58.4 18.5,60.6 21.0,58.4 23.5,60.6 26.0,58.4 28.5,60.6 31.0,58.4 33.5,60.6 36.0,58.4 38.5,60.6 41.0,58.4 43.5,60.6 46.0,58.4 48.5,60.6" fill="none" stroke="#80d0e8" stroke-width="2.4"/><polyline points="16.0,62.2 18.5,64.4 21.0,62.2 23.5,64.4 26.0,62.2 28.5,64.4 31.0,62.2 33.5,64.4 36.0,62.2 38.5,64.4 41.0,62.2 43.5,64.4 46.0,62.2 48.5,64.4" fill="none" stroke="#f8ec80" stroke-width="2.4"/><polyline points="16.0,66.0 18.5,68.2 21.0,66.0 23.5,68.2 26.0,66.0 28.5,68.2 31.0,66.0 33.5,68.2 36.0,66.0 38.5,68.2 41.0,66.0 43.5,68.2 46.0,66.0 48.5,68.2" fill="none" stroke="#c0a0e0" stroke-width="2.4"/><polyline points="16.0,69.8 18.5,72.0 21.0,69.8 23.5,72.0 26.0,69.8 28.5,72.0 31.0,69.8 33.5,72.0 36.0,69.8 38.5,72.0 41.0,69.8 43.5,72.0 46.0,69.8 48.5,72.0" fill="none" stroke="#e868a0" stroke-width="2.4"/><polyline points="16.0,73.6 18.5,75.8 21.0,73.6 23.5,75.8 26.0,73.6 28.5,75.8 31.0,73.6 33.5,75.8 36.0,73.6 38.5,75.8 41.0,73.6 43.5,75.8 46.0,73.6 48.5,75.8" fill="none" stroke="#78c8e0" stroke-width="2.4"/></svg></div>
<div class="a" style="left:395px;top:264px;width:66px;height:83px;background:#ffffff;overflow:hidden;box-shadow:1px 1px 2px rgba(0,0,0,.25);"><svg class="a" style="left:0;top:0" width="66" height="83"><circle cx="32" cy="42" r="21" fill="#fbf6f4" stroke="#e8d4cc" stroke-width="2.5"/><path d="M22 58c2-12 6-18 12-18s10 6 12 18z" fill="#d8d0d0"/><ellipse cx="30" cy="34" rx="6" ry="6.5" fill="#f0c8b0"/><path d="M23 31c0-7 4-10 8-10s8 3 7 9c-3-3-7-4-15 1z" fill="#e03828"/><path d="M16 40l6-2 2 8-6 3z" fill="#2a2a2a"/><circle cx="18" cy="53" r="5" fill="#e86098"/><circle cx="24" cy="58" r="4" fill="#f080b0"/><circle cx="14" cy="46" r="3" fill="#f4a0c0"/><circle cx="41" cy="20" r="4.5" fill="#f4b8d0"/><circle cx="46" cy="24" r="3.5" fill="#f0c0d8"/><path d="M50 30l3 4 4 0-3 3 1 4-4-2-4 2 1-4-3-3 4 0z" fill="#f0d8c0"/><path d="M36 52c2-4 4-4 4 0s2-6 4-4-1 6 2 5 2-4 3-3" stroke="#c03060" stroke-width="1.3" fill="none"/></svg></div>
<div class="a" style="left:472px;top:265px;width:66px;height:82px;background:linear-gradient(180deg,#f8e4cc 0,#f0d4b8 25%,#d8b098 42%,#6a4434 62%,#2a1e1a 78%,#181412 100%);overflow:hidden;box-shadow:1px 1px 2px rgba(0,0,0,.25);"></div>
<div class="a" style="left:549px;top:265px;width:66px;height:82px;background:linear-gradient(180deg,#f8c8d4 0,#e8a8c0 22%,#c86880 38%,#6a4a52 55%,#3a2a2e 75%,#080606 100%);overflow:hidden;box-shadow:1px 1px 2px rgba(0,0,0,.25);"></div>
<div class="a" style="left:319px;top:400px;width:66px;height:82px;background:linear-gradient(180deg,#ffffff 0,#fcf8f4 22%,#f0dcd0 38%,#d09880 55%,#8a3020 72%,#5a0a08 85%,#380404 100%);overflow:hidden;box-shadow:1px 1px 2px rgba(0,0,0,.25);"></div>
<div class="a" style="left:395px;top:426px;width:66px;height:56px;background:#060606;overflow:hidden;box-shadow:1px 1px 2px rgba(0,0,0,.25);"><svg class="a" style="left:0;top:0" width="66" height="56"><rect x="33.0" y="43.5" width="1.6" height="1.6" fill="#606060"/><rect x="29.1" y="28.4" width="1.6" height="1.6" fill="#a0a0a0"/><rect x="31.5" y="38.3" width="1.6" height="1.6" fill="#3a3a3a"/><rect x="18.6" y="27.8" width="1" height="1" fill="#8a8a8a"/><rect x="32.7" y="36.7" width="1.6" height="1.6" fill="#484848"/><rect x="31.1" y="16.1" width="1" height="1" fill="#a0a0a0"/><rect x="32.8" y="17.6" width="1" height="1" fill="#606060"/><rect x="35.9" y="23.9" width="1.6" height="1.6" fill="#484848"/><rect x="26.5" y="9.0" width="1.6" height="1.6" fill="#8a8a8a"/><rect x="37.8" y="29.8" width="1" height="1" fill="#606060"/><rect x="44.5" y="33.6" width="1.6" height="1.6" fill="#606060"/><rect x="35.9" y="11.7" width="1.6" height="1.6" fill="#8a8a8a"/><rect x="19.8" y="25.5" width="1" height="1" fill="#8a8a8a"/><rect x="45.7" y="22.4" width="1.3" height="1.3" fill="#a0a0a0"/><rect x="48.4" y="30.2" width="1.3" height="1.3" fill="#7a7a7a"/><rect x="55.3" y="26.2" width="1" height="1" fill="#484848"/><rect x="30.3" y="24.3" width="1.3" height="1.3" fill="#484848"/><rect x="31.1" y="34.5" width="1.6" height="1.6" fill="#3a3a3a"/><rect x="48.8" y="40.5" width="1" height="1" fill="#8a8a8a"/><rect x="43.5" y="32.3" width="1" height="1" fill="#8a8a8a"/><rect x="46.6" y="34.8" width="1.6" height="1.6" fill="#a0a0a0"/><rect x="30.1" y="22.2" width="1" height="1" fill="#606060"/><rect x="41.5" y="30.9" width="1" height="1" fill="#a0a0a0"/><rect x="29.8" y="29.5" width="1.6" height="1.6" fill="#7a7a7a"/><rect x="29.8" y="38.6" width="1" height="1" fill="#3a3a3a"/><rect x="41.9" y="29.9" width="1" height="1" fill="#606060"/><rect x="40.5" y="25.1" width="1.6" height="1.6" fill="#8a8a8a"/><rect x="22.8" y="20.4" width="1" height="1" fill="#484848"/><rect x="13.0" y="14.7" width="1.3" height="1.3" fill="#484848"/><rect x="16.1" y="37.7" width="1.3" height="1.3" fill="#7a7a7a"/><rect x="24.1" y="34.0" width="1.3" height="1.3" fill="#606060"/><rect x="43.4" y="31.7" width="1.3" height="1.3" fill="#484848"/><rect x="47.1" y="32.7" width="1" height="1" fill="#3a3a3a"/><rect x="46.4" y="36.2" width="1.3" height="1.3" fill="#8a8a8a"/><rect x="27.6" y="22.6" width="1.3" height="1.3" fill="#3a3a3a"/><rect x="31.8" y="28.9" width="1" height="1" fill="#a0a0a0"/><rect x="40.1" y="29.3" width="1.3" height="1.3" fill="#8a8a8a"/><rect x="23.9" y="26.2" width="1" height="1" fill="#606060"/><rect x="27.9" y="39.9" width="1.3" height="1.3" fill="#484848"/><rect x="28.7" y="40.2" width="1" height="1" fill="#a0a0a0"/><rect x="29.1" y="37.6" width="1" height="1" fill="#606060"/><rect x="24.2" y="44.3" width="1" height="1" fill="#3a3a3a"/><rect x="39.8" y="36.3" width="1" height="1" fill="#606060"/><rect x="12.0" y="38.4" width="1" height="1" fill="#7a7a7a"/><rect x="23.7" y="43.4" width="1.6" height="1.6" fill="#484848"/><rect x="29.5" y="48.4" width="1" height="1" fill="#a0a0a0"/><rect x="23.7" y="48.5" width="1" height="1" fill="#484848"/><rect x="38.6" y="24.1" width="1" height="1" fill="#3a3a3a"/><rect x="35.5" y="22.4" width="1.6" height="1.6" fill="#7a7a7a"/><rect x="26.9" y="48.2" width="1.6" height="1.6" fill="#606060"/><rect x="25.5" y="39.5" width="1.6" height="1.6" fill="#8a8a8a"/><rect x="43.1" y="33.3" width="1" height="1" fill="#7a7a7a"/><rect x="11.4" y="33.7" width="1.6" height="1.6" fill="#484848"/><rect x="2.1" y="20.5" width="1" height="1" fill="#3a3a3a"/><rect x="43.9" y="33.2" width="1.3" height="1.3" fill="#3a3a3a"/><rect x="9.8" y="25.3" width="1.3" height="1.3" fill="#a0a0a0"/><rect x="38.0" y="36.1" width="1" height="1" fill="#a0a0a0"/><rect x="50.8" y="18.0" width="1" height="1" fill="#484848"/><rect x="50.1" y="32.4" width="1.3" height="1.3" fill="#7a7a7a"/><rect x="32.2" y="33.0" width="1.6" height="1.6" fill="#484848"/><rect x="55.0" y="38.3" width="1.3" height="1.3" fill="#a0a0a0"/><rect x="52.7" y="50.0" width="1.6" height="1.6" fill="#484848"/><rect x="33.5" y="27.7" width="1" height="1" fill="#7a7a7a"/><rect x="48.5" y="45.5" width="1" height="1" fill="#a0a0a0"/><rect x="32.6" y="39.0" width="1" height="1" fill="#7a7a7a"/><rect x="17.7" y="32.0" width="1" height="1" fill="#8a8a8a"/><rect x="32.3" y="23.5" width="1.6" height="1.6" fill="#484848"/><rect x="41.2" y="33.8" width="1" height="1" fill="#a0a0a0"/><rect x="32.5" y="28.0" width="1" height="1" fill="#a0a0a0"/><rect x="29.2" y="31.3" width="1" height="1" fill="#3a3a3a"/><rect x="19.3" y="29.9" width="1.3" height="1.3" fill="#7a7a7a"/><rect x="41.8" y="35.3" width="1.3" height="1.3" fill="#8a8a8a"/><rect x="27.4" y="36.0" width="1.6" height="1.6" fill="#606060"/><rect x="42.0" y="39.9" width="1.6" height="1.6" fill="#3a3a3a"/><rect x="36.0" y="18.6" width="1.3" height="1.3" fill="#a0a0a0"/><rect x="16.5" y="34.5" width="1.6" height="1.6" fill="#484848"/><rect x="29.9" y="28.7" width="1" height="1" fill="#8a8a8a"/><rect x="23.0" y="39.4" width="1.3" height="1.3" fill="#3a3a3a"/><rect x="17.1" y="38.4" width="1" height="1" fill="#8a8a8a"/><rect x="32.4" y="43.4" width="1" height="1" fill="#3a3a3a"/><rect x="34.6" y="24.3" width="1" height="1" fill="#7a7a7a"/><rect x="41.8" y="27.2" width="1.3" height="1.3" fill="#484848"/><rect x="44.2" y="41.6" width="1.6" height="1.6" fill="#3a3a3a"/><rect x="23.1" y="16.9" width="1" height="1" fill="#484848"/><rect x="38.6" y="16.3" width="1" height="1" fill="#8a8a8a"/><rect x="33.0" y="40.9" width="1" height="1" fill="#484848"/><rect x="17.2" y="25.2" width="1" height="1" fill="#8a8a8a"/><rect x="36.2" y="22.7" width="1" height="1" fill="#a0a0a0"/><rect x="41.2" y="18.6" width="1.3" height="1.3" fill="#3a3a3a"/><rect x="14.7" y="22.5" width="1" height="1" fill="#a0a0a0"/><rect x="46.3" y="41.3" width="1" height="1" fill="#484848"/><rect x="10.9" y="24.8" width="1" height="1" fill="#7a7a7a"/><rect x="32.3" y="37.3" width="1.6" height="1.6" fill="#7a7a7a"/><rect x="18.3" y="19.9" width="1.3" height="1.3" fill="#8a8a8a"/><rect x="24.6" y="38.4" width="1.6" height="1.6" fill="#606060"/><rect x="42.4" y="29.0" width="1.6" height="1.6" fill="#7a7a7a"/><rect x="47.9" y="9.3" width="1.6" height="1.6" fill="#8a8a8a"/><rect x="38.2" y="39.4" width="1" height="1" fill="#7a7a7a"/><rect x="47.1" y="40.4" width="1.6" height="1.6" fill="#3a3a3a"/><rect x="13.4" y="20.8" width="1.3" height="1.3" fill="#7a7a7a"/><rect x="32.1" y="25.4" width="1.3" height="1.3" fill="#484848"/><rect x="51.7" y="23.2" width="1.3" height="1.3" fill="#484848"/><rect x="21.7" y="13.7" width="1.3" height="1.3" fill="#484848"/><rect x="39.2" y="25.5" width="1.6" height="1.6" fill="#606060"/><rect x="34.5" y="24.7" width="1.3" height="1.3" fill="#484848"/><rect x="32.9" y="42.5" width="1.6" height="1.6" fill="#7a7a7a"/><rect x="44.6" y="30.4" width="1" height="1" fill="#484848"/><rect x="11.6" y="34.8" width="1" height="1" fill="#3a3a3a"/><rect x="14.6" y="32.9" width="1" height="1" fill="#8a8a8a"/><rect x="24.2" y="32.5" width="1" height="1" fill="#7a7a7a"/><rect x="52.9" y="26.0" width="1" height="1" fill="#7a7a7a"/><rect x="33.0" y="25.6" width="1" height="1" fill="#484848"/><rect x="38.8" y="26.5" width="1.3" height="1.3" fill="#a0a0a0"/><rect x="34.0" y="35.0" width="1" height="1" fill="#a0a0a0"/><rect x="49.4" y="41.4" width="1" height="1" fill="#606060"/><rect x="23.0" y="41.3" width="1.3" height="1.3" fill="#3a3a3a"/><rect x="41.9" y="31.4" width="1.6" height="1.6" fill="#8a8a8a"/><rect x="24.5" y="31.6" width="1.6" height="1.6" fill="#484848"/><rect x="21.3" y="38.9" width="1.3" height="1.3" fill="#a0a0a0"/><rect x="42.4" y="35.9" width="1.3" height="1.3" fill="#8a8a8a"/><rect x="53.5" y="44.6" width="1.3" height="1.3" fill="#606060"/><rect x="32.4" y="22.6" width="1.3" height="1.3" fill="#3a3a3a"/><rect x="52.7" y="46.0" width="1" height="1" fill="#606060"/><rect x="25.5" y="20.7" width="1.3" height="1.3" fill="#a0a0a0"/><rect x="25.8" y="19.4" width="1" height="1" fill="#7a7a7a"/><rect x="42.0" y="50.0" width="1.6" height="1.6" fill="#3a3a3a"/><rect x="50.2" y="47.2" width="1.3" height="1.3" fill="#7a7a7a"/><rect x="22.2" y="19.6" width="1.3" height="1.3" fill="#8a8a8a"/><rect x="24.7" y="22.2" width="1" height="1" fill="#606060"/><rect x="30.6" y="26.4" width="1.6" height="1.6" fill="#7a7a7a"/><rect x="26.5" y="37.1" width="1" height="1" fill="#8a8a8a"/><rect x="34.2" y="28.9" width="1.3" height="1.3" fill="#484848"/><rect x="32.3" y="48.1" width="1.3" height="1.3" fill="#606060"/><rect x="43.3" y="27.3" width="1.3" height="1.3" fill="#a0a0a0"/><rect x="40.5" y="41.9" width="1" height="1" fill="#3a3a3a"/><rect x="9.8" y="22.4" width="1" height="1" fill="#a0a0a0"/><rect x="27.4" y="18.7" width="1.6" height="1.6" fill="#3a3a3a"/><rect x="39.3" y="15.8" width="1" height="1" fill="#484848"/><rect x="44.5" y="17.2" width="1" height="1" fill="#484848"/><rect x="25.3" y="28.2" width="1.3" height="1.3" fill="#606060"/><rect x="32.5" y="28.6" width="1.6" height="1.6" fill="#8a8a8a"/><rect x="42.3" y="27.9" width="1.3" height="1.3" fill="#484848"/><rect x="11.8" y="10.6" width="1.3" height="1.3" fill="#3a3a3a"/><rect x="44.9" y="22.0" width="1" height="1" fill="#a0a0a0"/><rect x="31.9" y="30.3" width="1" height="1" fill="#3a3a3a"/><rect x="18.6" y="31.6" width="1" height="1" fill="#8a8a8a"/><rect x="36.7" y="42.5" width="1.6" height="1.6" fill="#a0a0a0"/><rect x="38.9" y="36.3" width="1" height="1" fill="#3a3a3a"/><rect x="44.8" y="44.3" width="1" height="1" fill="#484848"/><rect x="47.1" y="33.2" width="1" height="1" fill="#484848"/><rect x="29.9" y="31.0" width="1.3" height="1.3" fill="#606060"/><rect x="27.2" y="39.1" width="1" height="1" fill="#3a3a3a"/><rect x="50.4" y="40.3" width="1" height="1" fill="#a0a0a0"/><rect x="31.3" y="21.8" width="1" height="1" fill="#7a7a7a"/><rect x="39.6" y="22.8" width="1.6" height="1.6" fill="#7a7a7a"/><rect x="24.2" y="47.1" width="1" height="1" fill="#8a8a8a"/><rect x="41.7" y="18.1" width="1.6" height="1.6" fill="#8a8a8a"/><rect x="27.9" y="31.6" width="1" height="1" fill="#8a8a8a"/><rect x="26.5" y="24.1" width="1.6" height="1.6" fill="#8a8a8a"/><rect x="32.5" y="20.9" width="1.6" height="1.6" fill="#7a7a7a"/><rect x="46.2" y="21.6" width="1.3" height="1.3" fill="#606060"/><rect x="22.1" y="34.1" width="1" height="1" fill="#8a8a8a"/><rect x="51.5" y="27.6" width="1.3" height="1.3" fill="#606060"/><rect x="39.6" y="39.7" width="1" height="1" fill="#7a7a7a"/><rect x="33.7" y="36.9" width="1" height="1" fill="#8a8a8a"/><rect x="28.1" y="26.9" width="1" height="1" fill="#484848"/><rect x="25.4" y="33.3" width="1.6" height="1.6" fill="#a0a0a0"/><rect x="21.3" y="34.3" width="1" height="1" fill="#3a3a3a"/><rect x="32.2" y="33.8" width="1" height="1" fill="#8a8a8a"/><rect x="51.2" y="19.8" width="1" height="1" fill="#7a7a7a"/><rect x="26.5" y="35.2" width="1" height="1" fill="#606060"/><rect x="28.8" y="35.2" width="1.3" height="1.3" fill="#a0a0a0"/><rect x="29.0" y="48.4" width="1.3" height="1.3" fill="#8a8a8a"/><rect x="17.9" y="31.9" width="1.3" height="1.3" fill="#a0a0a0"/><rect x="25.0" y="24.3" width="1" height="1" fill="#a0a0a0"/><rect x="20.0" y="7.0" width="1" height="1" fill="#484848"/><rect x="45.1" y="40.2" width="1" height="1" fill="#a0a0a0"/><rect x="19.4" y="30.8" width="1.3" height="1.3" fill="#7a7a7a"/><rect x="12.4" y="33.6" width="1" height="1" fill="#606060"/><rect x="18.4" y="42.2" width="1.6" height="1.6" fill="#3a3a3a"/><rect x="39.8" y="35.4" width="1" height="1" fill="#8a8a8a"/><rect x="18.2" y="30.4" width="1.6" height="1.6" fill="#484848"/><rect x="40.2" y="45.6" width="1.6" height="1.6" fill="#3a3a3a"/><rect x="39.2" y="20.1" width="1.3" height="1.3" fill="#7a7a7a"/><rect x="35.8" y="20.8" width="1.6" height="1.6" fill="#8a8a8a"/><rect x="20.5" y="46.3" width="1.6" height="1.6" fill="#484848"/><rect x="35.1" y="30.1" width="1" height="1" fill="#7a7a7a"/><rect x="34.1" y="27.1" width="1" height="1" fill="#3a3a3a"/><rect x="25.6" y="43.3" width="1" height="1" fill="#3a3a3a"/><rect x="48.1" y="17.0" width="1.6" height="1.6" fill="#8a8a8a"/><rect x="46.3" y="21.2" width="1.3" height="1.3" fill="#606060"/><rect x="39.2" y="31.1" width="1.3" height="1.3" fill="#a0a0a0"/><rect x="27.2" y="29.0" width="1" height="1" fill="#a0a0a0"/><rect x="32.2" y="34.2" width="1" height="1" fill="#7a7a7a"/><rect x="30.6" y="30.2" width="1.3" height="1.3" fill="#7a7a7a"/><rect x="39.6" y="29.6" width="1.6" height="1.6" fill="#484848"/><rect x="8.0" y="30.3" width="1" height="1" fill="#606060"/><rect x="17.0" y="33.8" width="1" height="1" fill="#a0a0a0"/><rect x="14.2" y="19.6" width="1" height="1" fill="#a0a0a0"/><rect x="39.9" y="28.3" width="1.6" height="1.6" fill="#a0a0a0"/><rect x="15.4" y="42.1" width="1" height="1" fill="#3a3a3a"/><rect x="20.3" y="17.8" width="1.3" height="1.3" fill="#3a3a3a"/><rect x="18.7" y="39.4" width="1.3" height="1.3" fill="#a0a0a0"/><rect x="39.6" y="19.5" width="1" height="1" fill="#8a8a8a"/><rect x="33.0" y="31.8" width="1" height="1" fill="#606060"/><rect x="28.1" y="36.5" width="1.3" height="1.3" fill="#a0a0a0"/><rect x="17.9" y="37.7" width="1" height="1" fill="#484848"/><rect x="32.0" y="50.1" width="1.3" height="1.3" fill="#a0a0a0"/><rect x="33.0" y="41.7" width="1" height="1" fill="#606060"/><rect x="23.9" y="45.9" width="1" height="1" fill="#7a7a7a"/><rect x="54.8" y="10.2" width="1.6" height="1.6" fill="#484848"/><rect x="44.4" y="25.8" width="1.3" height="1.3" fill="#8a8a8a"/><rect x="54.5" y="24.1" width="1.6" height="1.6" fill="#8a8a8a"/><rect x="56.7" y="13.3" width="1" height="1" fill="#8a8a8a"/><rect x="25.3" y="53.5" width="1" height="1" fill="#7a7a7a"/><rect x="38.2" y="32.0" width="1" height="1" fill="#484848"/><rect x="30.0" y="28.8" width="1" height="1" fill="#3a3a3a"/><rect x="30.1" y="41.5" width="1.6" height="1.6" fill="#606060"/><rect x="31.1" y="14.4" width="1" height="1" fill="#606060"/><rect x="39.4" y="36.1" width="1.6" height="1.6" fill="#8a8a8a"/><rect x="37.6" y="33.7" width="1.3" height="1.3" fill="#3a3a3a"/><rect x="62.4" y="26.9" width="1.3" height="1.3" fill="#3a3a3a"/><rect x="42.9" y="27.3" width="1.6" height="1.6" fill="#8a8a8a"/><rect x="18.4" y="29.0" width="1.3" height="1.3" fill="#606060"/><rect x="29.3" y="41.9" width="1.3" height="1.3" fill="#606060"/><rect x="31.6" y="7.9" width="1" height="1" fill="#484848"/><rect x="47.4" y="32.3" width="1" height="1" fill="#7a7a7a"/><rect x="33.8" y="33.8" width="1.6" height="1.6" fill="#7a7a7a"/></svg></div>
<div class="a" style="left:472px;top:414px;width:66px;height:68px;background:#000000;overflow:hidden;box-shadow:1px 1px 2px rgba(0,0,0,.25);"><svg class="a" style="left:0;top:0" width="66" height="68"><rect x="25.5" y="21" width="10.5" height="4.5" fill="#eeeeee"/><rect x="18" y="28" width="29" height="4.5" fill="#eeeeee"/><rect x="15.5" y="35.5" width="32" height="4.5" fill="#eeeeee"/><path d="M27.5 23.3h6.5M20 30.3h25M17.5 37.8h28" stroke="#6a6a6a" stroke-width="1" stroke-dasharray="2 .7"/></svg></div>
<div class="a" style="left:559px;top:399px;width:48px;height:83px;background:#fdfdfb;overflow:hidden;box-shadow:1px 1px 2px rgba(0,0,0,.25);"><svg class="a" style="left:0;top:0" width="48" height="83"><text x="21.0" y="22" text-anchor="middle" font-family="Liberation Serif" font-weight="bold" font-size="25.76" fill="#26261e" transform="translate(21.0 0) scale(1.25 1) translate(-21.0 0)">E</text><text x="11.86" y="34.5" text-anchor="middle" font-family="Liberation Serif" font-weight="bold" font-size="14.39" fill="#26261e">C</text><text x="28.94" y="34.5" text-anchor="middle" font-family="Liberation Serif" font-weight="bold" font-size="14.39" fill="#26261e">F</text><text x="9.19" y="44" text-anchor="middle" font-family="Liberation Serif" font-weight="bold" font-size="10.30" fill="#26261e">B</text><text x="20.30" y="44" text-anchor="middle" font-family="Liberation Serif" font-weight="bold" font-size="10.30" fill="#26261e">D</text><text x="31.41" y="44" text-anchor="middle" font-family="Liberation Serif" font-weight="bold" font-size="10.30" fill="#26261e">E</text><text x="8.63" y="52" text-anchor="middle" font-family="Liberation Serif" font-weight="bold" font-size="8.48" fill="#2a2a24">Z</text><text x="16.54" y="52" text-anchor="middle" font-family="Liberation Serif" font-weight="bold" font-size="8.48" fill="#2a2a24">P</text><text x="24.46" y="52" text-anchor="middle" font-family="Liberation Serif" font-weight="bold" font-size="8.48" fill="#2a2a24">N</text><text x="32.37" y="52" text-anchor="middle" font-family="Liberation Serif" font-weight="bold" font-size="8.48" fill="#2a2a24">O</text><text x="9.07" y="58.3" text-anchor="middle" font-family="Liberation Serif" font-weight="bold" font-size="6.67" fill="#3a3a34">D</text><text x="14.53" y="58.3" text-anchor="middle" font-family="Liberation Serif" font-weight="bold" font-size="6.67" fill="#3a3a34">E</text><text x="20.00" y="58.3" text-anchor="middle" font-family="Liberation Serif" font-weight="bold" font-size="6.67" fill="#3a3a34">F</text><text x="25.47" y="58.3" text-anchor="middle" font-family="Liberation Serif" font-weight="bold" font-size="6.67" fill="#3a3a34">C</text><text x="30.93" y="58.3" text-anchor="middle" font-family="Liberation Serif" font-weight="bold" font-size="6.67" fill="#3a3a34">R</text><text x="10.50" y="63" text-anchor="middle" font-family="Liberation Serif" font-weight="bold" font-size="4.85" fill="#555">F</text><text x="13.84" y="63" text-anchor="middle" font-family="Liberation Serif" font-weight="bold" font-size="4.85" fill="#555">E</text><text x="17.17" y="63" text-anchor="middle" font-family="Liberation Serif" font-weight="bold" font-size="4.85" fill="#555">L</text><text x="20.50" y="63" text-anchor="middle" font-family="Liberation Serif" font-weight="bold" font-size="4.85" fill="#555">O</text><text x="23.83" y="63" text-anchor="middle" font-family="Liberation Serif" font-weight="bold" font-size="4.85" fill="#555">P</text><text x="27.16" y="63" text-anchor="middle" font-family="Liberation Serif" font-weight="bold" font-size="4.85" fill="#555">Z</text><text x="30.50" y="63" text-anchor="middle" font-family="Liberation Serif" font-weight="bold" font-size="4.85" fill="#555">D</text><text x="12.13" y="68" text-anchor="middle" font-family="Liberation Serif" font-weight="bold" font-size="3.64" fill="#777">D</text><text x="14.81" y="68" text-anchor="middle" font-family="Liberation Serif" font-weight="bold" font-size="3.64" fill="#777">E</text><text x="17.48" y="68" text-anchor="middle" font-family="Liberation Serif" font-weight="bold" font-size="3.64" fill="#777">F</text><text x="20.16" y="68" text-anchor="middle" font-family="Liberation Serif" font-weight="bold" font-size="3.64" fill="#777">P</text><text x="22.84" y="68" text-anchor="middle" font-family="Liberation Serif" font-weight="bold" font-size="3.64" fill="#777">O</text><text x="25.52" y="68" text-anchor="middle" font-family="Liberation Serif" font-weight="bold" font-size="3.64" fill="#777">T</text><text x="28.19" y="68" text-anchor="middle" font-family="Liberation Serif" font-weight="bold" font-size="3.64" fill="#777">E</text><text x="30.87" y="68" text-anchor="middle" font-family="Liberation Serif" font-weight="bold" font-size="3.64" fill="#777">C</text><text x="12.94" y="72.5" text-anchor="middle" font-family="Liberation Serif" font-weight="bold" font-size="3.03" fill="#aaa">L</text><text x="15.39" y="72.5" text-anchor="middle" font-family="Liberation Serif" font-weight="bold" font-size="3.03" fill="#aaa">E</text><text x="17.83" y="72.5" text-anchor="middle" font-family="Liberation Serif" font-weight="bold" font-size="3.03" fill="#aaa">F</text><text x="20.28" y="72.5" text-anchor="middle" font-family="Liberation Serif" font-weight="bold" font-size="3.03" fill="#aaa">O</text><text x="22.72" y="72.5" text-anchor="middle" font-family="Liberation Serif" font-weight="bold" font-size="3.03" fill="#aaa">D</text><text x="25.17" y="72.5" text-anchor="middle" font-family="Liberation Serif" font-weight="bold" font-size="3.03" fill="#aaa">P</text><text x="27.61" y="72.5" text-anchor="middle" font-family="Liberation Serif" font-weight="bold" font-size="3.03" fill="#aaa">C</text><text x="30.06" y="72.5" text-anchor="middle" font-family="Liberation Serif" font-weight="bold" font-size="3.03" fill="#aaa">T</text><text x="12.85" y="76.5" text-anchor="middle" font-family="Liberation Serif" font-weight="bold" font-size="2.73" fill="#bbb">F</text><text x="15.32" y="76.5" text-anchor="middle" font-family="Liberation Serif" font-weight="bold" font-size="2.73" fill="#bbb">D</text><text x="17.79" y="76.5" text-anchor="middle" font-family="Liberation Serif" font-weight="bold" font-size="2.73" fill="#bbb">P</text><text x="20.26" y="76.5" text-anchor="middle" font-family="Liberation Serif" font-weight="bold" font-size="2.73" fill="#bbb">L</text><text x="22.74" y="76.5" text-anchor="middle" font-family="Liberation Serif" font-weight="bold" font-size="2.73" fill="#bbb">T</text><text x="25.21" y="76.5" text-anchor="middle" font-family="Liberation Serif" font-weight="bold" font-size="2.73" fill="#bbb">C</text><text x="27.68" y="76.5" text-anchor="middle" font-family="Liberation Serif" font-weight="bold" font-size="2.73" fill="#bbb">E</text><text x="30.15" y="76.5" text-anchor="middle" font-family="Liberation Serif" font-weight="bold" font-size="2.73" fill="#bbb">O</text><text x="13.75" y="80.5" text-anchor="middle" font-family="Liberation Serif" font-weight="bold" font-size="2.42" fill="#ccc">T</text><text x="16.33" y="80.5" text-anchor="middle" font-family="Liberation Serif" font-weight="bold" font-size="2.42" fill="#ccc">E</text><text x="18.92" y="80.5" text-anchor="middle" font-family="Liberation Serif" font-weight="bold" font-size="2.42" fill="#ccc">C</text><text x="21.50" y="80.5" text-anchor="middle" font-family="Liberation Serif" font-weight="bold" font-size="2.42" fill="#ccc">F</text><text x="24.08" y="80.5" text-anchor="middle" font-family="Liberation Serif" font-weight="bold" font-size="2.42" fill="#ccc">D</text><text x="26.67" y="80.5" text-anchor="middle" font-family="Liberation Serif" font-weight="bold" font-size="2.42" fill="#ccc">P</text><text x="29.25" y="80.5" text-anchor="middle" font-family="Liberation Serif" font-weight="bold" font-size="2.42" fill="#ccc">L</text></svg></div>
<span class="t" id="tx47" style="left:316px;top:220.91px;font-size:10.5px;color:#303030;font-weight:normal;transform:scaleX(0.747);-webkit-text-stroke:0.25px #303030;">16226_137926875...</span>
<span class="t" id="tx48" style="left:394px;top:220.91px;font-size:10.5px;color:#303030;font-weight:normal;transform:scaleX(0.737);-webkit-text-stroke:0.25px #303030;">1623720_1414496...</span>
<span class="t" id="tx49" style="left:470px;top:220.91px;font-size:10.5px;color:#303030;font-weight:normal;transform:scaleX(0.747);-webkit-text-stroke:0.25px #303030;">1920328_1425835...</span>
<span class="t" id="tx50" style="left:316px;top:355.91px;font-size:10.5px;color:#303030;font-weight:normal;transform:scaleX(0.747);-webkit-text-stroke:0.25px #303030;">10401902_154109...</span>
<span class="t" id="tx51" style="left:394px;top:355.91px;font-size:10.5px;color:#303030;font-weight:normal;transform:scaleX(0.737);-webkit-text-stroke:0.25px #303030;">10426156_138209...</span>
<span class="t" id="tx52" style="left:470px;top:355.91px;font-size:10.5px;color:#303030;font-weight:normal;transform:scaleX(0.747);-webkit-text-stroke:0.25px #303030;">10427332_139092...</span>
<span class="t" id="tx53" style="left:547px;top:355.91px;font-size:10.5px;color:#303030;font-weight:normal;transform:scaleX(0.742);-webkit-text-stroke:0.25px #303030;">10568786_427586...</span>
<span class="t" id="tx54" style="left:316px;top:490.91px;font-size:10.5px;color:#303030;font-weight:normal;transform:scaleX(0.747);-webkit-text-stroke:0.25px #303030;">10653489_142283...</span>
<span class="t" id="tx55" style="left:394px;top:490.91px;font-size:10.5px;color:#303030;font-weight:normal;transform:scaleX(0.737);-webkit-text-stroke:0.25px #303030;">10849938_358837...</span>
<span class="t" id="tx56" style="left:470px;top:490.91px;font-size:10.5px;color:#303030;font-weight:normal;transform:scaleX(0.747);-webkit-text-stroke:0.25px #303030;">10931419_140252...</span>
<span class="t" id="tx57" style="left:547px;top:490.91px;font-size:10.5px;color:#303030;font-weight:normal;transform:scaleX(0.742);-webkit-text-stroke:0.25px #303030;">10947214_137926...</span>
<span class="t" id="tx58" style="left:546px;top:220.91px;font-size:10.5px;color:#303030;font-weight:normal;transform:scaleX(0.745);-webkit-text-stroke:0.25px #303030;">10394647_15410926</span>
<span class="t" id="tx59" style="left:546px;top:234.91px;font-size:10.5px;color:#303030;font-weight:normal;transform:scaleX(0.751);-webkit-text-stroke:0.25px #303030;">99504354_91807117</span>
<span class="t" id="tx60" style="left:554.6px;top:248.91px;font-size:10.5px;color:#303030;font-weight:normal;transform:scaleX(0.744);-webkit-text-stroke:0.25px #303030;">14828486541_n</span>
<span class="t" id="tx61" style="left:312.8px;top:544.11px;font-size:10.5px;color:#1e1e1e;font-weight:normal;transform:scaleX(0.698);-webkit-text-stroke:0.25px #1e1e1e;">File name:</span>
<div class="a" style="left:381px;top:539px;width:181px;height:20px;background:#ffffff;border:1px solid #abadb3"></div>
<span class="t" id="tx62" style="left:384px;top:544.11px;font-size:10.5px;color:#1e1e1e;font-weight:normal;transform:scaleX(0.755);-webkit-text-stroke:0.25px #1e1e1e;">10394647_1541092699504354_91807117148</span>
<svg class="a" style="left:550px;top:547px;" width="7" height="5" viewBox="0 0 7 5"><path d="M0.5 0.5L3.5 3.5L6.5 0.5" stroke="#333" stroke-width="1.3" fill="none"/></svg>
<span class="t" id="tx63" style="left:313px;top:568.11px;font-size:10.5px;color:#1e1e1e;font-weight:normal;transform:scaleX(0.689);-webkit-text-stroke:0.25px #1e1e1e;">Files of type:</span>
<div class="a" style="left:381px;top:564px;width:180px;height:19px;background:linear-gradient(#f3f3f3,#e4e4e4);border:1px solid #acacac"></div>
<span class="t" id="tx64" style="left:384px;top:568.61px;font-size:10.5px;color:#1e1e1e;font-weight:normal;transform:scaleX(0.697);-webkit-text-stroke:0.25px #1e1e1e;">All Formats</span>
<svg class="a" style="left:550px;top:571px;" width="7" height="5" viewBox="0 0 7 5"><path d="M0.5 0.5L3.5 3.5L6.5 0.5" stroke="#333" stroke-width="1.3" fill="none"/></svg>
<div class="a" style="left:586px;top:539px;width:54px;height:20px;background:linear-gradient(#e8f3fc,#d8eaf9);border:1px solid #7eb4ea"></div>
<span class="t" id="tx65" style="left:602.6px;top:544.11px;font-size:10.5px;color:#1e1e1e;font-weight:normal;transform:scaleX(0.751);-webkit-text-stroke:0.25px #1e1e1e;">Open</span>
<div class="a" style="left:586px;top:563px;width:54px;height:20px;background:linear-gradient(#f2f2f2,#e0e0e0);border:1px solid #acacac"></div>
<span class="t" id="tx66" style="left:600px;top:568.61px;font-size:10.5px;color:#1e1e1e;font-weight:normal;transform:scaleX(0.759);-webkit-text-stroke:0.25px #1e1e1e;">Cancel</span>
<div class="a" style="left:322px;top:603px;width:11px;height:12px;background:#ffffff;border:1px solid #707070"></div>
<span class="t" id="tx67" style="left:334px;top:604.27px;font-size:11.5px;color:#1e1e1e;font-weight:normal;transform:scaleX(0.780);-webkit-text-stroke:0.25px #1e1e1e;">Image Sequence</span>
<svg class="a" style="left:647px;top:625px;" width="7" height="7" viewBox="0 0 7 7"><path d="M6 0h1v1H6zM6 3h1v1H6zM3 3h1v1H3zM6 6h1v1H6zM3 6h1v1H3zM0 6h1v1H0z" fill="#888"/></svg>
<div class="a" style="left:0px;top:663px;width:1000px;height:37px;background:linear-gradient(90deg,#6d717d 0,#6a707f 350px,#666d84 550px,#6b7186 640px,#7a7e8a 720px,#74788a 850px,#6f7482 1000px);"></div>
<div class="a" style="left:0px;top:663px;width:1000px;height:37px;background:linear-gradient(180deg,rgba(255,255,255,.06),rgba(0,0,0,.04));"></div>
<svg class="a" style="left:0px;top:663px;overflow:hidden" width="1000" height="37" viewBox="0 0 1000 37"><path d="M533 0L575 37" stroke="rgba(255,255,255,.22)" stroke-width="2.5"/><path d="M646 0L606 37" stroke="rgba(255,255,255,.18)" stroke-width="2"/><path d="M640 0L668 0L735 37L700 37Z" fill="rgba(255,255,255,.16)"/><path d="M655 0L720 37" stroke="rgba(255,255,255,.15)" stroke-width="4"/></svg>
<div class="a" style="left:356px;top:663px;width:41px;height:37px;background:rgba(255,255,255,.18);border:1px solid rgba(255,255,255,.25)"></div>
<div class="a" style="left:401px;top:663px;width:42px;height:37px;background:rgba(255,255,255,.28);border:1px solid rgba(255,255,255,.35)"></div>
<svg class="a" style="left:8px;top:671px;" width="21" height="22" viewBox="0 0 21 22"><path d="M0 3l9-1.3V10H0zM10 1.5L21 0v10H10zM0 11h9v8.5L0 18zM10 11h11v11l-11-1.5z" fill="#f4f4f4"/></svg>
<svg class="a" style="left:46px;top:666px;" width="28" height="29" viewBox="0 0 28 29"><path d="M5 27C0 23 4 11 14 5S29 -1 26 5" stroke="#f0b820" stroke-width="2.6" fill="none"/><text x="15" y="26" text-anchor="middle" font-family="Liberation Sans" font-weight="bold" font-size="36" fill="#3ab0ec" transform="translate(15 0) scale(1.1 1) translate(-15 0)">e</text></svg>
<svg class="a" style="left:93px;top:669px;" width="23" height="25" viewBox="0 0 23 25"><rect x="0" y="0" width="23" height="25" fill="#12a02a"/><path d="M4 9h15v13H4z" fill="#fff"/><path d="M8.5 9V6.5a3 3 0 0 1 6 0V9" stroke="#fff" stroke-width="1.3" fill="none"/><path d="M7.5 12h3.5v3.3H7.5zM12 12h3.5v3.3H12zM7.5 16.3h3.5v3.3H7.5zM12 16.3h3.5v3.3H12z" fill="#12a02a"/></svg>
<svg class="a" style="left:137px;top:668px;" width="26" height="26" viewBox="0 0 26 26"><rect x="0.5" y="0.5" width="25" height="25" rx="4" fill="#3a6ac8" stroke="#6a9ae8"/><path d="M3 6l5 15 5-10 5 10 5-15" stroke="#9ae040" stroke-width="3.5" fill="none" stroke-linejoin="round"/></svg>
<svg class="a" style="left:177px;top:668px;" width="24" height="26" viewBox="0 0 24 26"><rect x="0" y="0" width="24" height="26" rx="4" fill="#101010"/><circle cx="12" cy="13" r="8" fill="none" stroke="#e83080" stroke-width="4" stroke-dasharray="12 38"/><circle cx="12" cy="13" r="8" fill="none" stroke="#30a0e8" stroke-width="4" stroke-dasharray="12 38" stroke-dashoffset="-12"/><circle cx="12" cy="13" r="8" fill="none" stroke="#60d040" stroke-width="4" stroke-dasharray="14 36" stroke-dashoffset="-24"/><circle cx="12" cy="13" r="8" fill="none" stroke="#f0a020" stroke-width="4" stroke-dasharray="12 38" stroke-dashoffset="-38"/><circle cx="12" cy="13" r="3" fill="#101010" stroke="#ddd"/></svg>
<svg class="a" style="left:226px;top:666px;" width="27" height="28" viewBox="0 0 27 28"><circle cx="14" cy="17" r="10" fill="#f08c10"/><circle cx="12" cy="14" r="5" fill="#fff3d0"/><circle cx="3" cy="6" r="2.5" fill="#f0a020"/><circle cx="8" cy="3" r="2.3" fill="#f0a020"/><circle cx="14" cy="2.3" r="2.3" fill="#f0a020"/><circle cx="20" cy="3" r="2.3" fill="#f0a020"/></svg>
<svg class="a" style="left:275px;top:668px;" width="23" height="24" viewBox="0 0 23 24"><circle cx="11.5" cy="12" r="11" fill="#d03a2a"/><path d="M11.5 12L2 6.5A11 11 0 0 0 6 21.5z" fill="#28a040"/><path d="M11.5 12L6 21.5A11 11 0 0 0 22.5 12z" fill="#f0c020"/><path d="M11.5 12L2 6.5A11 11 0 0 1 21 6.5z" fill="#d83828"/><circle cx="11.5" cy="12" r="5" fill="#fff"/><circle cx="11.5" cy="12" r="3.8" fill="#3a80e0"/></svg>
<svg class="a" style="left:320px;top:667px;" width="24" height="27" viewBox="0 0 24 27"><ellipse cx="12" cy="13.5" rx="11" ry="13" fill="#f4f4f8"/><path d="M4 6c6-4 16-2 16 4-3-3-10-2-14 3 5-2 12 0 13 5-2 5-9 8-15 5 5 1 11-2 11-5-4-3-10-1-14 1z" fill="#2a70d8"/><path d="M6 20c4 3 11 2 14-4" stroke="#e03060" stroke-width="2.5" fill="none"/></svg>
<svg class="a" style="left:364px;top:666px;" width="25" height="28" viewBox="0 0 25 28"><path d="M1 4h9l2 2h12v20H1z" fill="#e8b840"/><path d="M1 9h23v17H1z" fill="#f8e090"/><rect x="5" y="2" width="3" height="4" fill="#3aa03a"/><rect x="15" y="3" width="4" height="3" fill="#d04040"/><path d="M4 17h17v9H4z" fill="#4aa8e8"/><path d="M8 20h9v6H8z" fill="#d8eaf8"/></svg>
<svg class="a" style="left:411px;top:668px;" width="21" height="22" viewBox="0 0 21 22"><rect x="0" y="0" width="21" height="22" fill="#0a1a50"/><rect x="0.8" y="0.8" width="19.4" height="20.4" fill="none" stroke="#3a8ae8" stroke-width="1.4"/><text x="3" y="15" font-family="Liberation Sans" font-weight="bold" font-size="11" fill="#9ad0ff">Ps</text></svg>
<svg class="a" style="left:666px;top:674px;" width="14" height="15" viewBox="0 0 14 15"><path d="M5.5 0l5.5 2v5c0 4-3 6-5.5 7C3 13 0 11 0 7V2z" fill="#2a5ad8"/><path d="M5.5 0v14C3 13 0 11 0 7V2z" fill="#e8e8f0"/><path d="M7 2L3 8h3l-1 5 4-7H6z" fill="#e83030"/></svg>
<svg class="a" style="left:686px;top:674px;" width="14" height="15" viewBox="0 0 14 15"><rect x="6" y="4" width="2" height="10" fill="#eee"/><rect x="9" y="2" width="2" height="12" fill="#eee"/><rect x="3" y="8" width="2" height="6" fill="#eee"/><circle cx="5" cy="5" r="4.5" fill="#e82828"/><path d="M3 3l4 4M7 3L3 7" stroke="#fff" stroke-width="1.3"/></svg>
<svg class="a" style="left:702px;top:674px;" width="14" height="15" viewBox="0 0 14 15"><path d="M1 7h11v6H1z" fill="#2a3a9a"/><path d="M1 9h11v1.5H1z" fill="#e83030"/><path d="M3 2h6v5H3z" fill="#f0d020" stroke="#111"/><path d="M0 13h13v1H0z" fill="#111"/></svg>
<svg class="a" style="left:719px;top:674px;" width="14" height="15" viewBox="0 0 14 15"><rect x="0.5" y="0.5" width="10" height="13" fill="#f0e040" stroke="#806a10"/><path d="M4 4l3 3-3 3" stroke="#806a10" stroke-width="1.3" fill="none"/></svg>
<svg class="a" style="left:737px;top:674px;" width="14" height="15" viewBox="0 0 14 15"><path d="M1 0v14" stroke="#eee" stroke-width="1.5"/><path d="M2 1h6l1 2h3v5H7l-1-2H2z" fill="#eee"/></svg>
<svg class="a" style="left:753px;top:674px;" width="14" height="15" viewBox="0 0 14 15"><rect x="0" y="0" width="13" height="14" rx="1" fill="#d8d8d8"/><ellipse cx="6.5" cy="6" rx="4.5" ry="3.8" fill="#fff"/></svg>
<svg class="a" style="left:775px;top:674px;" width="14" height="15" viewBox="0 0 14 15"><rect x="0.5" y="2" width="7" height="12" rx="1" fill="none" stroke="#f0f0f0" stroke-width="1.2"/><rect x="2.5" y="0.5" width="3" height="2" fill="#f0f0f0"/><rect x="2" y="8" width="4" height="5" fill="#f0f0f0"/></svg>
<svg class="a" style="left:787px;top:674px;" width="14" height="15" viewBox="0 0 14 15"><circle cx="5" cy="5" r="4" fill="#f0a010"/><circle cx="9" cy="9" r="4" fill="#e88010"/><rect x="7" y="8" width="5" height="6" fill="#e02020"/></svg>
<svg class="a" style="left:805px;top:674px;" width="14" height="15" viewBox="0 0 14 15"><rect x="0" y="1" width="12" height="11" fill="#2a4aa8"/><rect x="2" y="3" width="8" height="6" fill="#7ab0f0"/><rect x="0" y="12" width="12" height="2" fill="#eee"/></svg>
<svg class="a" style="left:822px;top:674px;" width="14" height="15" viewBox="0 0 14 15"><rect x="0" y="1" width="12" height="12" fill="#2a4aa8"/><rect x="1" y="3" width="10" height="8" fill="#f0f0f0"/><rect x="4" y="5" width="4" height="4" fill="#c02040"/></svg>
<svg class="a" style="left:840px;top:674px;" width="14" height="15" viewBox="0 0 14 15"><rect x="0" y="0" width="12" height="14" fill="#555"/><rect x="1" y="1" width="10" height="8" fill="#888"/><circle cx="4" cy="12" r="2" fill="#333"/><circle cx="9" cy="11" r="2" fill="#333"/></svg>
<svg class="a" style="left:858px;top:674px;" width="14" height="15" viewBox="0 0 14 15"><path d="M1 13h2v-2H1zM4 13h2V9H4zM7 13h2V6H7zM10 13h2V2h-2z" fill="#fff"/><path d="M6 13l3.5-7 3.5 7z" fill="#f0c010"/></svg>
<svg class="a" style="left:876px;top:674px;" width="14" height="15" viewBox="0 0 14 15"><circle cx="6.5" cy="7" r="6.5" fill="#e8f4f8"/><circle cx="6.5" cy="7" r="4.5" fill="#18a0d0"/><path d="M4 7h5M7 5l2 2-2 2" stroke="#fff" stroke-width="1.2" fill="none"/></svg>
<svg class="a" style="left:896px;top:674px;" width="14" height="15" viewBox="0 0 14 15"><path d="M0 5h3l4-4v12l-4-4H0z" fill="#f4f4f4"/><path d="M9 4c1 1.5 1 4.5 0 6" stroke="#ddd" fill="none"/></svg>
<svg class="a" style="left:915px;top:675px;" width="16" height="12" viewBox="0 0 16 12"><g stroke="#f0f0f0" stroke-width="1.1" fill="none"><circle cx="2" cy="2" r="1" fill="#f0f0f0"/><path d="M2 3c0 2 1 3 1 8"/><path d="M5 6.5c1-1 2-1 3 0v4.5M5 6.5v4.5"/><path d="M10 6v5h3.5V6M10 8.5h3.5"/></g></svg>
<span class="t" id="tx68" style="left:955.5px;top:669.49px;font-size:11px;color:#f4f4f4;font-weight:normal;transform:scaleX(0.726);">17:25</span>
<span class="t" id="tx69" style="left:944px;top:685.19px;font-size:11px;color:#f4f4f4;font-weight:normal;transform:scaleX(0.763);">16/04/2015</span>
</body></html>
